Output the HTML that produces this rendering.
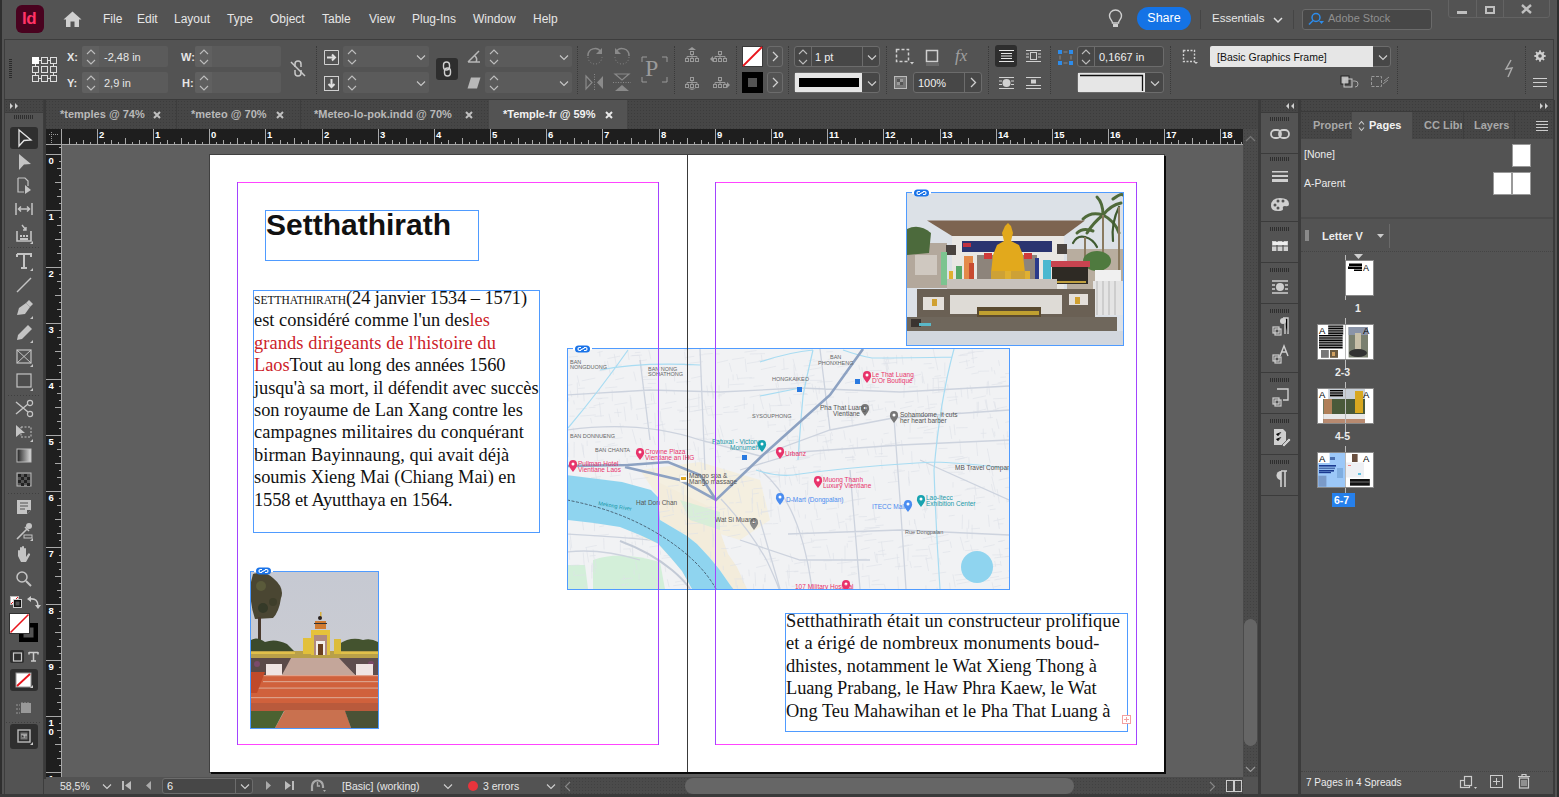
<!DOCTYPE html><html><head><meta charset="utf-8"><style>
*{margin:0;padding:0;box-sizing:border-box}
html,body{width:1559px;height:797px;overflow:hidden;background:#535353;font-family:"Liberation Sans",sans-serif}
.a{position:absolute}
.menu{position:absolute;top:12px;font-size:12px;color:#e6e6e6;white-space:nowrap}
.lbl{position:absolute;font-size:11px;color:#e6e6e6;font-weight:bold;white-space:nowrap}
.fld{position:absolute;background:#5b5b5b;border-radius:2px}
.sep{position:absolute;width:1px;border-left:1px dotted #3a3a3a}
.tab{position:absolute;top:108px;font-size:11px;font-weight:bold;color:#b9b9b9;white-space:nowrap}
.ser{font-family:"Liberation Serif",serif}
</style></head><body>
<div class="a" style="left:0;top:0;width:2px;height:797px;background:#2f2f2f"></div>
<div class="a" style="left:16px;top:5px;width:28px;height:28px;border-radius:6px;background:#49021f"></div>
<div class="a" style="left:22px;top:9px;font-size:17px;font-weight:bold;color:#ff3366;letter-spacing:-0.5px">Id</div>
<svg class="a" style="left:63px;top:11px" width="19" height="17"><path d="M9.5 0.5 L18.5 8.5 L16 8.5 L16 16 L11.5 16 L11.5 10.5 L7.5 10.5 L7.5 16 L3 16 L3 8.5 L0.5 8.5 Z" fill="#cfcfcf"/></svg>
<div class="menu" style="left:103px">File</div>
<div class="menu" style="left:137px">Edit</div>
<div class="menu" style="left:174px">Layout</div>
<div class="menu" style="left:227px">Type</div>
<div class="menu" style="left:270px">Object</div>
<div class="menu" style="left:322px">Table</div>
<div class="menu" style="left:369px">View</div>
<div class="menu" style="left:412px">Plug-Ins</div>
<div class="menu" style="left:473px">Window</div>
<div class="menu" style="left:533px">Help</div>
<svg class="a" style="left:1108px;top:9px" width="15" height="20"><path d="M7.5 1 C3.5 1 1.5 4 1.5 7 C1.5 10 4.5 11.5 4.5 14 L10.5 14 C10.5 11.5 13.5 10 13.5 7 C13.5 4 11.5 1 7.5 1 Z" fill="none" stroke="#cfcfcf" stroke-width="1.4"/><rect x="5" y="15" width="5" height="3" fill="#cfcfcf"/></svg>
<div class="a" style="left:1137px;top:7px;width:54px;height:23px;border-radius:12px;background:#1473e6;color:#fff;font-size:12.5px;text-align:center;line-height:23px">Share</div>
<div class="a" style="left:1200px;top:10px;width:1px;height:19px;background:#454545"></div>
<div class="menu" style="left:1212px;font-size:11.5px">Essentials</div>
<svg class="a" style="left:1273px;top:17px" width="10" height="7"><path d="M1 1 L5 5 L9 1" fill="none" stroke="#e0e0e0" stroke-width="1.5"/></svg>
<div class="a" style="left:1293px;top:10px;width:1px;height:19px;background:#454545"></div>
<div class="a" style="left:1302px;top:9px;width:130px;height:21px;border:1px solid #6a6a6a;border-radius:3px;background:#474747"></div>
<svg class="a" style="left:1307px;top:12px" width="18" height="14"><circle cx="9" cy="5.5" r="4" fill="none" stroke="#2d8ceb" stroke-width="1.5"/><line x1="6" y1="8.5" x2="2" y2="12.5" stroke="#2d8ceb" stroke-width="1.6"/><path d="M12 9 L17 9 L14.5 12 Z" fill="#2d8ceb"/></svg>
<div class="a" style="left:1328px;top:12px;font-size:11px;color:#8f8f8f">Adobe Stock</div>
<div class="a" style="left:1448px;top:-3px;width:102px;height:21px;border:1px solid #636363;border-radius:3px"></div>
<div class="a" style="left:1476px;top:0;width:1px;height:18px;background:#636363"></div>
<div class="a" style="left:1503px;top:0;width:1px;height:18px;background:#636363"></div>
<div class="a" style="left:1457px;top:11px;width:10px;height:3px;background:#bfbfbf"></div>
<div class="a" style="left:1485px;top:6px;width:10px;height:8px;border:2px solid #bfbfbf"></div>
<svg class="a" style="left:1521px;top:4px" width="11" height="10"><path d="M1 1 L10 9 M10 1 L1 9" stroke="#bfbfbf" stroke-width="2.4"/></svg>
<div class="a" style="left:4px;top:39px;width:1550px;height:61px;border:1px solid #3d3d3d;border-bottom:none"></div>
<div class="a" style="left:9px;top:59px;width:3px;height:20px;background:repeating-linear-gradient(#2a2a2a 0 1px,transparent 1px 2px)"></div>
<svg class="a" style="left:31px;top:56px" width="27" height="27"><g fill="none" stroke="#dedede" stroke-width="1"><rect x="1.5" y="1.5" width="6" height="6"/><rect x="10.5" y="1.5" width="6" height="6"/><rect x="19.5" y="1.5" width="6" height="6"/><rect x="1.5" y="10.5" width="6" height="6"/><rect x="10.5" y="10.5" width="6" height="6"/><rect x="19.5" y="10.5" width="6" height="6"/><rect x="1.5" y="19.5" width="6" height="6"/><rect x="10.5" y="19.5" width="6" height="6"/><rect x="19.5" y="19.5" width="6" height="6"/><path d="M7.5 4.5 H10.5 M16.5 4.5 H19.5 M7.5 22.5 H10.5 M16.5 22.5 H19.5 M4.5 7.5 V10.5 M4.5 16.5 V19.5 M22.5 7.5 V10.5 M22.5 16.5 V19.5"/></g><rect x="1" y="1" width="7" height="7" fill="#fff"/></svg>
<div class="lbl" style="left:67px;top:51px">X:</div>
<div class="lbl" style="left:67px;top:77px">Y:</div>
<div class="fld" style="left:82px;top:46px;width:86px;height:21px"></div>
<div class="a" style="left:82px;top:46px;width:17px;height:21px;background:#606060;border-radius:2px 0 0 2px"></div>
<svg class="a" style="left:85px;top:48px" width="12" height="18"><path d="M2 6 L6 2 L10 6 M2 12 L6 16 L10 12" fill="none" stroke="#bdbdbd" stroke-width="1.1"/></svg>
<div class="fld" style="left:82px;top:72px;width:86px;height:21px"></div>
<div class="a" style="left:82px;top:72px;width:17px;height:21px;background:#606060;border-radius:2px 0 0 2px"></div>
<svg class="a" style="left:85px;top:74px" width="12" height="18"><path d="M2 6 L6 2 L10 6 M2 12 L6 16 L10 12" fill="none" stroke="#bdbdbd" stroke-width="1.1"/></svg>
<div class="a" style="left:104px;top:51px;font-size:11px;color:#e6e6e6">-2,48 in</div>
<div class="a" style="left:104px;top:77px;font-size:11px;color:#e6e6e6">2,9 in</div>
<div class="lbl" style="left:181px;top:51px">W:</div>
<div class="lbl" style="left:182px;top:77px">H:</div>
<div class="fld" style="left:195px;top:46px;width:86px;height:21px"></div>
<div class="a" style="left:195px;top:46px;width:17px;height:21px;background:#606060;border-radius:2px 0 0 2px"></div>
<svg class="a" style="left:198px;top:48px" width="12" height="18"><path d="M2 6 L6 2 L10 6 M2 12 L6 16 L10 12" fill="none" stroke="#bdbdbd" stroke-width="1.1"/></svg>
<div class="fld" style="left:195px;top:72px;width:86px;height:21px"></div>
<div class="a" style="left:195px;top:72px;width:17px;height:21px;background:#606060;border-radius:2px 0 0 2px"></div>
<svg class="a" style="left:198px;top:74px" width="12" height="18"><path d="M2 6 L6 2 L10 6 M2 12 L6 16 L10 12" fill="none" stroke="#bdbdbd" stroke-width="1.1"/></svg>
<svg class="a" style="left:290px;top:60px" width="16" height="17"><g fill="none" stroke="#c8c8c8" stroke-width="1.5"><path d="M5 7 V4 A3 3 0 0 1 11 4 V7"/><path d="M5 10 V13 A3 3 0 0 0 11 13 V10"/><line x1="1" y1="2" x2="15" y2="16"/></g></svg>
<div class="sep" style="left:316px;top:46px;height:48px"></div>
<svg class="a" style="left:324px;top:50px" width="15" height="15"><rect x="0.5" y="0.5" width="14" height="14" fill="none" stroke="#d0d0d0" stroke-dasharray="14 0"/><path d="M3 7.5 H11 M8 4.5 L11 7.5 L8 10.5" fill="none" stroke="#e0e0e0" stroke-width="2"/></svg>
<svg class="a" style="left:324px;top:76px" width="15" height="15"><rect x="0.5" y="0.5" width="14" height="14" fill="none" stroke="#d0d0d0"/><path d="M7.5 3 V11 M4.5 8 L7.5 11 L10.5 8" fill="none" stroke="#e0e0e0" stroke-width="2"/></svg>
<div class="fld" style="left:343px;top:46px;width:86px;height:21px"></div>
<svg class="a" style="left:346px;top:48px" width="12" height="18"><path d="M2 6 L6 2 L10 6 M2 12 L6 16 L10 12" fill="none" stroke="#bdbdbd" stroke-width="1.1"/></svg>
<svg class="a" style="left:416px;top:54px" width="10" height="7"><path d="M1 1.5 L5 5.5 L9 1.5" fill="none" stroke="#c8c8c8" stroke-width="1.1"/></svg>
<div class="fld" style="left:343px;top:72px;width:86px;height:21px"></div>
<svg class="a" style="left:346px;top:74px" width="12" height="18"><path d="M2 6 L6 2 L10 6 M2 12 L6 16 L10 12" fill="none" stroke="#bdbdbd" stroke-width="1.1"/></svg>
<svg class="a" style="left:416px;top:80px" width="10" height="7"><path d="M1 1.5 L5 5.5 L9 1.5" fill="none" stroke="#c8c8c8" stroke-width="1.1"/></svg>
<div class="a" style="left:436px;top:58px;width:22px;height:22px;background:#2e2e2e;border-radius:3px"></div>
<svg class="a" style="left:441px;top:61px" width="12" height="16"><g fill="none" stroke="#cfcfcf" stroke-width="1.4"><rect x="2.5" y="1" width="6" height="8" rx="3"/><rect x="3.5" y="7" width="6" height="8" rx="3"/></g></svg>
<svg class="a" style="left:467px;top:50px" width="14" height="13"><path d="M1 12 L12 1 M1 12 H13 M8 6 A5 5 0 0 1 9 12" fill="none" stroke="#b8b8b8" stroke-width="1.5"/></svg>
<svg class="a" style="left:467px;top:77px" width="14" height="12"><path d="M4 0.5 H13.5 L10 11.5 H0.5 Z" fill="#b8b8b8"/></svg>
<div class="fld" style="left:485px;top:46px;width:87px;height:21px"></div>
<svg class="a" style="left:488px;top:48px" width="12" height="18"><path d="M2 6 L6 2 L10 6 M2 12 L6 16 L10 12" fill="none" stroke="#bdbdbd" stroke-width="1.1"/></svg>
<svg class="a" style="left:559px;top:54px" width="10" height="7"><path d="M1 1.5 L5 5.5 L9 1.5" fill="none" stroke="#c8c8c8" stroke-width="1.1"/></svg>
<div class="fld" style="left:485px;top:72px;width:87px;height:21px"></div>
<svg class="a" style="left:488px;top:74px" width="12" height="18"><path d="M2 6 L6 2 L10 6 M2 12 L6 16 L10 12" fill="none" stroke="#bdbdbd" stroke-width="1.1"/></svg>
<svg class="a" style="left:559px;top:80px" width="10" height="7"><path d="M1 1.5 L5 5.5 L9 1.5" fill="none" stroke="#c8c8c8" stroke-width="1.1"/></svg>
<div class="sep" style="left:577px;top:46px;height:48px"></div>
<svg class="a" style="left:586px;top:47px" width="18" height="18"><path d="M2 9 A7 7 0 0 1 15 5" fill="none" stroke="#8a8a8a" stroke-width="1.5"/><path d="M2 10 A7 7 0 0 0 16 10" fill="none" stroke="#8a8a8a" stroke-width="1" stroke-dasharray="1 2"/><path d="M16 1 V7 H10 Z" fill="#8a8a8a"/></svg>
<svg class="a" style="left:613px;top:47px" width="18" height="18"><path d="M16 9 A7 7 0 0 0 3 5" fill="none" stroke="#8a8a8a" stroke-width="1.5"/><path d="M16 10 A7 7 0 0 1 2 10" fill="none" stroke="#8a8a8a" stroke-width="1" stroke-dasharray="1 2"/><path d="M2 1 V7 H8 Z" fill="#8a8a8a"/></svg>
<svg class="a" style="left:585px;top:74px" width="19" height="17"><path d="M1 2 L7 8.5 L1 15 Z" fill="none" stroke="#8a8a8a" stroke-width="1.2"/><path d="M18 2 L12 8.5 L18 15 Z" fill="#8a8a8a"/><line x1="9.5" y1="0" x2="9.5" y2="17" stroke="#8a8a8a" stroke-dasharray="1 1.5"/></svg>
<svg class="a" style="left:613px;top:73px" width="18" height="19"><path d="M2 1 H16 L9 7 Z" fill="none" stroke="#8a8a8a" stroke-width="1.2"/><path d="M2 18 H16 L9 12 Z" fill="#8a8a8a"/><line x1="0" y1="9.5" x2="18" y2="9.5" stroke="#8a8a8a" stroke-dasharray="1 1.5"/></svg>
<svg class="a" style="left:641px;top:56px" width="27" height="27"><path d="M1 6 V1 H6 M21 1 H26 V6 M26 21 V26 H21 M6 26 H1 V21" fill="none" stroke="#9a9a9a" stroke-width="1"/></svg>
<div class="a ser" style="left:645px;top:55px;font-size:24px;color:#9a9a9a">P</div>
<div class="sep" style="left:674px;top:46px;height:48px"></div>
<svg class="a" style="left:682px;top:47px" width="20" height="17"><g fill="none" stroke="#9a9a9a" stroke-width="1"><rect x="8.5" y="4.5" width="3" height="3"/><rect x="3.5" y="11.5" width="3" height="3"/><rect x="8.5" y="11.5" width="3" height="3"/><rect x="13.5" y="11.5" width="3" height="3"/><path d="M10 7.5 V9.5 M5 11.5 V9.5 H15 V11.5 M10 9.5 V11.5"/></g><path d="M6 3 L10 0 L14 3 Z" fill="#9a9a9a"/></svg>
<svg class="a" style="left:710px;top:47px" width="20" height="17"><g fill="none" stroke="#9a9a9a" stroke-width="1"><rect x="8.5" y="4.5" width="3" height="3"/><rect x="3.5" y="11.5" width="3" height="3"/><rect x="8.5" y="11.5" width="3" height="3"/><rect x="13.5" y="11.5" width="3" height="3"/><path d="M10 7.5 V9.5 M5 11.5 V9.5 H15 V11.5 M10 9.5 V11.5"/></g><path d="M3 9 L0 12 L3 15 Z" fill="#9a9a9a"/></svg>
<svg class="a" style="left:682px;top:73px" width="20" height="17"><g fill="none" stroke="#9a9a9a" stroke-width="1"><rect x="8.5" y="4.5" width="3" height="3"/><rect x="3.5" y="11.5" width="3" height="3"/><rect x="8.5" y="11.5" width="3" height="3"/><rect x="13.5" y="11.5" width="3" height="3"/><path d="M10 7.5 V9.5 M5 11.5 V9.5 H15 V11.5 M10 9.5 V11.5"/></g><path d="M6 15.5 L10 17 L14 15.5 Z" fill="#9a9a9a"/></svg>
<svg class="a" style="left:710px;top:73px" width="20" height="17"><g fill="none" stroke="#9a9a9a" stroke-width="1"><rect x="8.5" y="4.5" width="3" height="3"/><rect x="3.5" y="11.5" width="3" height="3"/><rect x="8.5" y="11.5" width="3" height="3"/><rect x="13.5" y="11.5" width="3" height="3"/><path d="M10 7.5 V9.5 M5 11.5 V9.5 H15 V11.5 M10 9.5 V11.5"/></g><path d="M17 9 L20 12 L17 15 Z" fill="#9a9a9a"/></svg>
<div class="sep" style="left:736px;top:46px;height:48px"></div>
<svg class="a" style="left:742px;top:46px" width="21" height="21"><rect x="0.5" y="0.5" width="20" height="20" fill="#fff" stroke="#3a3a3a"/><line x1="1" y1="20" x2="20" y2="1" stroke="#e8141b" stroke-width="1.8"/></svg>
<svg class="a" style="left:742px;top:72px" width="21" height="21"><rect x="0" y="0" width="21" height="21" fill="#000"/><rect x="6" y="6" width="9" height="9" fill="#535353"/></svg>
<div class="a" style="left:767px;top:46px;width:16px;height:21px;border:1px solid #6c6c6c;border-radius:3px"></div>
<svg class="a" style="left:772px;top:51px" width="7" height="11"><path d="M1 1 L5.5 5.5 L1 10" fill="none" stroke="#d0d0d0" stroke-width="1.3"/></svg>
<div class="a" style="left:767px;top:72px;width:16px;height:21px;border:1px solid #6c6c6c;border-radius:3px"></div>
<svg class="a" style="left:772px;top:77px" width="7" height="11"><path d="M1 1 L5.5 5.5 L1 10" fill="none" stroke="#d0d0d0" stroke-width="1.3"/></svg>
<div class="sep" style="left:788px;top:46px;height:48px"></div>
<div class="a" style="left:794px;top:46px;width:86px;height:21px;border:1px solid #6c6c6c;border-radius:3px;background:#474747"></div>
<div class="a" style="left:811px;top:46px;width:1px;height:21px;background:#6c6c6c"></div>
<div class="a" style="left:862px;top:46px;width:1px;height:21px;background:#6c6c6c"></div>
<svg class="a" style="left:797px;top:48px" width="12" height="18"><path d="M2 6 L6 2 L10 6 M2 12 L6 16 L10 12" fill="none" stroke="#bdbdbd" stroke-width="1.1"/></svg>
<svg class="a" style="left:867px;top:54px" width="10" height="7"><path d="M1 1.5 L5 5.5 L9 1.5" fill="none" stroke="#d0d0d0" stroke-width="1.1"/></svg>
<div class="a" style="left:815px;top:51px;font-size:11px;color:#f0f0f0">1 pt</div>
<div class="a" style="left:794px;top:72px;width:86px;height:21px;border:1px solid #6c6c6c;border-radius:3px;background:#474747"></div>
<div class="a" style="left:795px;top:73px;width:67px;height:19px;background:#e6e6e6"></div>
<div class="a" style="left:799px;top:78px;width:60px;height:9px;background:#000"></div>
<svg class="a" style="left:867px;top:80px" width="10" height="7"><path d="M1 1.5 L5 5.5 L9 1.5" fill="none" stroke="#d0d0d0" stroke-width="1.1"/></svg>
<div class="sep" style="left:886px;top:46px;height:48px"></div>
<svg class="a" style="left:895px;top:48px" width="20" height="18"><rect x="1.5" y="1.5" width="12" height="12" fill="none" stroke="#cfcfcf" stroke-width="1.5" stroke-dasharray="3 2"/><path d="M15 14 L19 14 L17 16.5 Z" fill="#cfcfcf"/></svg>
<svg class="a" style="left:925px;top:49px" width="15" height="18"><rect x="1.5" y="1.5" width="11" height="11" fill="none" stroke="#cfcfcf" stroke-width="1.5"/><rect x="1" y="14" width="13" height="3" fill="#6a6a6a"/></svg>
<div class="a ser" style="left:955px;top:46px;font-size:17px;font-style:italic;color:#a0a0a0">fx</div>
<svg class="a" style="left:894px;top:76px" width="13" height="13"><rect x="0.5" y="0.5" width="12" height="12" fill="#777" stroke="#bbb"/><rect x="3" y="3" width="3" height="3" fill="#555"/><rect x="6" y="6" width="3" height="3" fill="#555"/><rect x="6" y="3" width="3" height="3" fill="#999"/><rect x="3" y="6" width="3" height="3" fill="#999"/></svg>
<div class="a" style="left:913px;top:72px;width:69px;height:21px;border:1px solid #6c6c6c;border-radius:3px;background:#474747"></div>
<div class="a" style="left:964px;top:72px;width:1px;height:21px;background:#6c6c6c"></div>
<div class="a" style="left:918px;top:77px;font-size:11px;color:#f0f0f0">100%</div>
<svg class="a" style="left:970px;top:77px" width="7" height="11"><path d="M1 1 L5.5 5.5 L1 10" fill="none" stroke="#d0d0d0" stroke-width="1.3"/></svg>
<div class="sep" style="left:988px;top:46px;height:48px"></div>
<div class="a" style="left:995px;top:45px;width:22px;height:22px;background:#2e2e2e;border-radius:3px"></div>
<svg class="a" style="left:999px;top:49px" width="15" height="14"><path d="M0 1.5 H15 M0 12.5 H15 M2 4.5 H13 M2 7 H13 M2 9.5 H13" stroke="#e8e8e8" stroke-width="1.2"/></svg>
<svg class="a" style="left:1026px;top:49px" width="15" height="14"><path d="M0 1.5 H15 M0 12.5 H15 M0 5 H3 M0 8 H3 M12 5 H15 M12 8 H15" stroke="#d0d0d0" stroke-width="1.2"/><rect x="4.5" y="3.5" width="6" height="7" fill="none" stroke="#d0d0d0"/></svg>
<svg class="a" style="left:999px;top:76px" width="15" height="14"><path d="M0 1.5 H15 M0 12.5 H15 M0 5 H3 M0 8.5 H3 M12 5 H15 M12 8.5 H15" stroke="#d0d0d0" stroke-width="1.2"/><circle cx="7.5" cy="7" r="4" fill="#d0d0d0"/></svg>
<svg class="a" style="left:1026px;top:76px" width="15" height="14"><path d="M0 1.5 H15 M0 9.5 H15 M0 12.5 H15" stroke="#d0d0d0" stroke-width="1.2"/><rect x="5" y="3.5" width="5" height="4" fill="#d0d0d0"/></svg>
<div class="sep" style="left:1050px;top:46px;height:48px"></div>
<svg class="a" style="left:1058px;top:50px" width="15" height="15"><g fill="#2d8ceb"><rect x="0" y="0" width="4" height="4"/><rect x="11" y="0" width="4" height="4"/><rect x="0" y="11" width="4" height="4"/><rect x="11" y="11" width="4" height="4"/></g><path d="M5.5 2 H9.5 M5.5 13 H9.5 M2 5.5 V9.5 M13 5.5 V9.5" stroke="#888" stroke-width="1"/></svg>
<div class="a" style="left:1077px;top:46px;width:87px;height:21px;border:1px solid #6c6c6c;border-radius:3px;background:#474747"></div>
<div class="a" style="left:1094px;top:46px;width:1px;height:21px;background:#6c6c6c"></div>
<svg class="a" style="left:1080px;top:48px" width="12" height="18"><path d="M2 6 L6 2 L10 6 M2 12 L6 16 L10 12" fill="none" stroke="#bdbdbd" stroke-width="1.1"/></svg>
<div class="a" style="left:1099px;top:51px;font-size:11px;color:#f0f0f0">0,1667 in</div>
<div class="a" style="left:1077px;top:72px;width:87px;height:21px;border:1px solid #6c6c6c;border-radius:3px;background:#474747"></div>
<div class="a" style="left:1078px;top:73px;width:67px;height:19px;background:#e6e6e6"></div>
<svg class="a" style="left:1079px;top:74px" width="65" height="17"><path d="M1 1.5 H63.5 V17" fill="none" stroke="#111" stroke-width="1.3"/></svg>
<svg class="a" style="left:1150px;top:80px" width="10" height="7"><path d="M1 1.5 L5 5.5 L9 1.5" fill="none" stroke="#d0d0d0" stroke-width="1.1"/></svg>
<div class="sep" style="left:1170px;top:46px;height:48px"></div>
<svg class="a" style="left:1182px;top:49px" width="16" height="15"><rect x="1.5" y="1.5" width="11" height="11" fill="none" stroke="#cfcfcf" stroke-width="1.4" stroke-dasharray="2 1.5"/><path d="M12 13 L16 13 L14 15 Z" fill="#cfcfcf"/></svg>
<div class="a" style="left:1210px;top:46px;width:181px;height:21px;border:1px solid #6c6c6c;border-radius:3px;background:#474747"></div>
<div class="a" style="left:1210px;top:46px;width:163px;height:21px;background:#e6e6e6;border-radius:2px 0 0 2px"></div>
<div class="a" style="left:1217px;top:51px;font-size:10.5px;color:#111">[Basic Graphics Frame]</div>
<svg class="a" style="left:1378px;top:54px" width="10" height="7"><path d="M1 1.5 L5 5.5 L9 1.5" fill="none" stroke="#d0d0d0" stroke-width="1.1"/></svg>
<svg class="a" style="left:1340px;top:75px" width="22" height="15"><rect x="1" y="1" width="8" height="8" fill="#bbb" stroke="#222"/><rect x="4" y="4" width="8" height="8" fill="none" stroke="#ccc"/><path d="M15 12 A3 3 0 1 0 15 6 L13 6" fill="none" stroke="#aaa"/></svg>
<svg class="a" style="left:1370px;top:75px" width="20" height="14"><rect x="1.5" y="1.5" width="10" height="10" fill="none" stroke="#999" stroke-dasharray="3 1.5"/><path d="M14 6 L19 2 M13 9 L18 5" stroke="#999"/></svg>
<div class="sep" style="left:1397px;top:46px;height:48px"></div>
<svg class="a" style="left:1504px;top:59px" width="12" height="19"><path d="M7 1 L2 10 L8 9 L4 18" fill="none" stroke="#aaa" stroke-width="1.5"/></svg>
<div class="sep" style="left:1525px;top:46px;height:48px"></div>
<svg class="a" style="left:1534px;top:50px" width="12" height="12"><path d="M10.08 4.99 L11.75 5.24 L11.75 6.76 L10.08 7.01 L9.60 8.17 L10.61 9.53 L9.53 10.61 L8.17 9.60 L7.01 10.08 L6.76 11.75 L5.24 11.75 L4.99 10.08 L3.83 9.60 L2.47 10.61 L1.39 9.53 L2.40 8.17 L1.92 7.01 L0.25 6.76 L0.25 5.24 L1.92 4.99 L2.40 3.83 L1.39 2.47 L2.47 1.39 L3.83 2.40 L4.99 1.92 L5.24 0.25 L6.76 0.25 L7.01 1.92 L8.17 2.40 L9.53 1.39 L10.61 2.47 L9.60 3.83 Z" fill="#d0d0d0"/><circle cx="6" cy="6" r="1.8" fill="#535353"/></svg>
<svg class="a" style="left:1533px;top:78px" width="14" height="9"><path d="M0 0.5 H14 M0 4.5 H14 M0 8.5 H14" stroke="#d0d0d0"/></svg>
<div class="a" style="left:45px;top:100px;width:1213px;height:29px;background-color:#464646;background-image:radial-gradient(#3c3c3c 0.7px,transparent 0.8px);background-size:3px 3px"></div>
<div class="a" style="left:44px;top:100px;width:2px;height:29px;background:#3a3a3a"></div>
<div class="a" style="left:176px;top:100px;width:1px;height:29px;background:#3d3d3d"></div>
<div class="a" style="left:300px;top:100px;width:1px;height:29px;background:#3d3d3d"></div>
<div class="a" style="left:489px;top:100px;width:138px;height:29px;background:#535353"></div>
<div class="tab" style="left:60px">*temples @ 74%</div>
<svg class="a" style="left:153px;top:111px" width="8" height="8"><path d="M1 1 L7 7 M7 1 L1 7" stroke="#c0c0c0" stroke-width="2"/></svg>
<div class="tab" style="left:191px">*meteo @ 70%</div>
<svg class="a" style="left:276px;top:111px" width="8" height="8"><path d="M1 1 L7 7 M7 1 L1 7" stroke="#c0c0c0" stroke-width="2"/></svg>
<div class="tab" style="left:314px">*Meteo-lo-pok.indd @ 70%</div>
<svg class="a" style="left:465px;top:111px" width="8" height="8"><path d="M1 1 L7 7 M7 1 L1 7" stroke="#c0c0c0" stroke-width="2"/></svg>
<div class="tab" style="left:503px;color:#f2f2f2">*Temple-fr @ 59%</div>
<svg class="a" style="left:605px;top:111px" width="8" height="8"><path d="M1 1 L7 7 M7 1 L1 7" stroke="#e8e8e8" stroke-width="2"/></svg>
<div class="a" style="left:4px;top:100px;width:40px;height:695px;background:#535353;border-left:1px solid #3d3d3d;border-right:1px solid #3d3d3d"></div>
<div class="a" style="left:5px;top:100px;width:38px;height:12px;background-color:#464646;background-image:radial-gradient(#3c3c3c 0.7px,transparent 0.8px);background-size:3px 3px"></div>
<svg class="a" style="left:9px;top:102px" width="12" height="8"><path d="M1 1 L4 4 L1 7 Z M6 1 L9 4 L6 7 Z" fill="#d0d0d0"/></svg>
<div class="a" style="left:5px;top:112px;width:38px;height:1px;background:#3d3d3d"></div>
<div class="a" style="left:14px;top:115px;width:19px;height:4px;background:repeating-linear-gradient(90deg,#2e2e2e 0 1px,transparent 1px 2px)"></div>
<div class="a" style="left:10px;top:127px;width:28px;height:22px;background:#2f2f2f;border-radius:3px"></div>
<svg class="a" style="left:5px;top:120px" width="38" height="640"><g transform="translate(19,18)"><path d="M-5 -8 L7 2 L0 2.5 L-5 8 Z" fill="none" stroke="#e6e6e6" stroke-width="1.3"/></g><g transform="translate(19,42)"><path d="M-5 -8 L7 2 L0 2.5 L-5 8 Z" fill="#c4c4c4"/></g><g transform="translate(19,65)"><path d="M-6 -7 H1 L4 -4 V1 M-6 -7 V7 H0" fill="none" stroke="#c4c4c4" stroke-width="1.2"/><path d="M1 0 L7 5 L1 9 Z" fill="#c4c4c4"/></g><g transform="translate(19,89)"><path d="M-8 -6 V6 M8 -6 V6 M-5 0 H5 M-3 -2.5 L-5.5 0 L-3 2.5 M3 -2.5 L5.5 0 L3 2.5" fill="none" stroke="#c4c4c4" stroke-width="1.5"/></g><g transform="translate(19,114)"><path d="M-7 -3 V7 H7 V-3" fill="none" stroke="#c4c4c4" stroke-width="1.6"/><path d="M-2 -9 L2 -4 M2 -7 V-4 H-1" fill="none" stroke="#c4c4c4" stroke-width="1.4"/><rect x="-4" y="1" width="2" height="2" fill="#c4c4c4"/><rect x="-1" y="1" width="2" height="2" fill="#c4c4c4"/><rect x="2" y="1" width="2" height="2" fill="#c4c4c4"/><rect x="-4" y="4" width="8" height="2" fill="#c4c4c4"/><path d="M9 7 L9 10 L6 10 Z" fill="#c4c4c4"/></g><g transform="translate(19,141)"><path d="M-7 -7 H7 V-4 M-7 -7 V-4 M0 -7 V7 M-3 7 H3" fill="none" stroke="#c4c4c4" stroke-width="2"/><path d="M9 7 L9 10 L6 10 Z" fill="#c4c4c4"/></g><g transform="translate(19,165)"><path d="M-7 7 L7 -7" stroke="#c4c4c4" stroke-width="1.5"/></g><g transform="translate(19,189)"><path d="M-7 6 L-5 -1 L2 -6 L6 -2 L1 5 Z" fill="#c4c4c4"/><path d="M2 -6 L5 -9 L9 -5 L6 -2" fill="#c4c4c4"/><path d="M9 7 L9 10 L6 10 Z" fill="#c4c4c4"/></g><g transform="translate(19,213)"><path d="M-7 7 L-6 2 L4 -8 L8 -4 L-2 6 Z" fill="#c4c4c4"/><path d="M9 7 L9 10 L6 10 Z" fill="#c4c4c4"/></g><g transform="translate(19,237)"><rect x="-7" y="-7" width="14" height="13" fill="none" stroke="#c4c4c4" stroke-width="1.2"/><path d="M-7 -7 L7 6 M7 -7 L-7 6" stroke="#c4c4c4" stroke-width="1"/><path d="M9 7 L9 10 L6 10 Z" fill="#c4c4c4"/></g><g transform="translate(19,261)"><rect x="-7" y="-7" width="14" height="13" fill="#4d4d4d" stroke="#c4c4c4" stroke-width="1.2"/><path d="M9 7 L9 10 L6 10 Z" fill="#c4c4c4"/></g><g transform="translate(19,288)"><circle cx="6" cy="-5" r="2.6" fill="none" stroke="#c4c4c4" stroke-width="1.2"/><circle cx="6" cy="6" r="2.6" fill="none" stroke="#c4c4c4" stroke-width="1.2"/><path d="M-8 -6 L4 4 M-8 6 L4 -4" stroke="#c4c4c4" stroke-width="1.4"/></g><g transform="translate(19,312)"><path d="M-8 -7 L1 1 L-3 1 L-8 5 Z" fill="#c4c4c4"/><rect x="-3" y="-5" width="10" height="10" fill="none" stroke="#c4c4c4" stroke-dasharray="2 1.5"/><path d="M9 7 L9 10 L6 10 Z" fill="#c4c4c4"/></g><g transform="translate(19,336)"><defs><linearGradient id="gg"><stop offset="0" stop-color="#222"/><stop offset="1" stop-color="#ddd"/></linearGradient></defs><rect x="-7" y="-7" width="14" height="13" fill="url(#gg)" stroke="#bbb"/></g><g transform="translate(19,360)"><rect x="-7" y="-7" width="14" height="13" fill="#555" stroke="#bbb"/><g fill="#222"><rect x="-6" y="-6" width="3" height="3"/><rect x="0" y="-6" width="3" height="3"/><rect x="-3" y="-3" width="3" height="3"/><rect x="3" y="-3" width="3" height="3"/><rect x="-6" y="0" width="3" height="3"/><rect x="0" y="0" width="3" height="3"/><rect x="-3" y="3" width="3" height="3"/><rect x="3" y="3" width="3" height="3"/></g></g><g transform="translate(19,387)"><path d="M-7 -7 H7 V3 L3 7 H-7 Z" fill="#c4c4c4"/><path d="M-4 -4 H4 M-4 -1 H4 M-4 2 H1" stroke="#535353" stroke-width="1.2"/><path d="M3 7 V3 H7" fill="#535353"/></g><g transform="translate(19,411)"><path d="M-7 8 L3 -2 M1 -4 L5 0" stroke="#c4c4c4" stroke-width="1.6"/><circle cx="5" cy="-5" r="3" fill="#c4c4c4"/><rect x="0" y="4" width="8" height="3" fill="none" stroke="#c4c4c4"/><path d="M9 7 L9 10 L6 10 Z" fill="#c4c4c4"/></g><g transform="translate(19,435)"><path d="M-6 1 V-4 A1 1 0 0 1 -4 -4 V0 V-7 A1 1 0 0 1 -2 -7 V0 V-8 A1 1 0 0 1 0 -8 V0 V-6 A1 1 0 0 1 2 -6 V2 L4 -1 A1 1 0 0 1 6 0 L2 7 H-3 Z" fill="#c4c4c4"/></g><g transform="translate(19,459)"><circle cx="-2" cy="-2" r="5" fill="none" stroke="#c4c4c4" stroke-width="1.5"/><path d="M2 2 L7 7" stroke="#c4c4c4" stroke-width="2"/></g><line x1="3" y1="127.5" x2="35" y2="127.5" stroke="#3f3f3f" stroke-dasharray="1 2"/><line x1="3" y1="275.5" x2="35" y2="275.5" stroke="#3f3f3f" stroke-dasharray="1 2"/><line x1="3" y1="373.5" x2="35" y2="373.5" stroke="#3f3f3f" stroke-dasharray="1 2"/></svg>
<svg class="a" style="left:8px;top:595px" width="34" height="50"><rect x="2.5" y="1.5" width="8" height="8" fill="#fff" stroke="#bbb"/><line x1="3" y1="9" x2="10" y2="2" stroke="#e8141b"/><rect x="5.5" y="4.5" width="8" height="8" fill="#111" stroke="#ccc"/><rect x="7.5" y="6.5" width="4" height="4" fill="#535353"/><path d="M22 4 Q30 3 30 11" fill="none" stroke="#ccc" stroke-width="1.6"/><path d="M27 10 L30 14 L33 10 Z M23 1 L19 4 L23 7 Z" fill="#ccc"/><rect x="11" y="28" width="19" height="19" fill="#000"/><rect x="15.5" y="32.5" width="10" height="10" fill="#535353"/><rect x="1.5" y="18.5" width="20" height="20" fill="#fff" stroke="#333"/><line x1="2.5" y1="37.5" x2="20.5" y2="19.5" stroke="#e8141b" stroke-width="1.6"/></svg>
<div class="a" style="left:10px;top:650px;width:14px;height:13px;background:#2f2f2f;border-radius:2px"></div>
<svg class="a" style="left:10px;top:650px" width="32" height="14"><rect x="3.5" y="3" width="8" height="8" fill="none" stroke="#ccc" stroke-width="1.2"/><path d="M19 2.5 H28 M23.5 2.5 V11 M21 11 H26 M19 2 V4.5 M28 2 V4.5" stroke="#ccc" stroke-width="1.5"/></svg>
<div class="a" style="left:10px;top:669px;width:28px;height:22px;background:#2f2f2f;border-radius:3px"></div>
<svg class="a" style="left:15px;top:672px" width="19" height="17"><rect x="1" y="1" width="15" height="14" fill="#fff" stroke="#999"/><line x1="2" y1="14" x2="15" y2="2" stroke="#e8141b" stroke-width="1.8"/><path d="M18 13 L18 16 L15 16 Z" fill="#ccc"/></svg>
<svg class="a" style="left:15px;top:701px" width="20" height="14"><path d="M6 2 H16 V12 H6 Z" fill="#999"/><path d="M1 4 H5 M1 8 H5 M1 12 H5 M7 1 V2 M10 1 V2 M13 1 V2" stroke="#999" stroke-dasharray="2 1"/></svg>
<svg class="a" style="left:3px;top:722px" width="40" height="2"><line x1="3" y1="0.5" x2="38" y2="0.5" stroke="#3f3f3f" stroke-dasharray="1 2"/></svg>
<div class="a" style="left:10px;top:724px;width:28px;height:25px;background:#2f2f2f;border-radius:3px"></div>
<svg class="a" style="left:16px;top:728px" width="18" height="18"><rect x="2" y="2" width="12" height="12" fill="none" stroke="#bbb" stroke-width="1.4"/><rect x="4.5" y="4.5" width="7" height="7" fill="#777"/><path d="M5 7 H8 V10 M8 7 H11" stroke="#ccc"/><path d="M17 14 L17 17 L14 17 Z" fill="#ccc"/></svg>
<div class="a" style="left:44px;top:129px;width:2px;height:650px;background:#3a3a3a"></div>
<div class="a" style="left:46px;top:129px;width:16px;height:16px;background:#1e1e1e"></div>
<svg class="a" style="left:46px;top:129px" width="16" height="16"><path d="M3 5.5 H12 M5.5 3 V14" stroke="#999" stroke-dasharray="1 1"/><line x1="15.5" y1="0" x2="15.5" y2="16" stroke="#a8a8a8"/><line x1="0" y1="15.5" x2="16" y2="15.5" stroke="#a8a8a8"/></svg>
<svg style="position:absolute;left:62px;top:129px" width="1181" height="16"><rect width="1181" height="16" fill="#1e1e1e"/><g stroke="#a8a8a8" stroke-width="1"><line x1="7.5" y1="9" x2="7.5" y2="15"/><line x1="14.5" y1="13" x2="14.5" y2="15"/><line x1="21.5" y1="11" x2="21.5" y2="15"/><line x1="28.5" y1="13" x2="28.5" y2="15"/><line x1="35.5" y1="0" x2="35.5" y2="15"/><line x1="42.5" y1="13" x2="42.5" y2="15"/><line x1="49.5" y1="11" x2="49.5" y2="15"/><line x1="56.5" y1="13" x2="56.5" y2="15"/><line x1="63.5" y1="9" x2="63.5" y2="15"/><line x1="70.5" y1="13" x2="70.5" y2="15"/><line x1="77.5" y1="11" x2="77.5" y2="15"/><line x1="84.5" y1="13" x2="84.5" y2="15"/><line x1="91.5" y1="0" x2="91.5" y2="15"/><line x1="98.5" y1="13" x2="98.5" y2="15"/><line x1="105.5" y1="11" x2="105.5" y2="15"/><line x1="112.5" y1="13" x2="112.5" y2="15"/><line x1="119.5" y1="9" x2="119.5" y2="15"/><line x1="126.5" y1="13" x2="126.5" y2="15"/><line x1="133.5" y1="11" x2="133.5" y2="15"/><line x1="140.5" y1="13" x2="140.5" y2="15"/><line x1="147.5" y1="0" x2="147.5" y2="15"/><line x1="154.5" y1="13" x2="154.5" y2="15"/><line x1="161.5" y1="11" x2="161.5" y2="15"/><line x1="168.5" y1="13" x2="168.5" y2="15"/><line x1="175.5" y1="9" x2="175.5" y2="15"/><line x1="182.5" y1="13" x2="182.5" y2="15"/><line x1="189.5" y1="11" x2="189.5" y2="15"/><line x1="196.5" y1="13" x2="196.5" y2="15"/><line x1="203.5" y1="0" x2="203.5" y2="15"/><line x1="210.5" y1="13" x2="210.5" y2="15"/><line x1="218.5" y1="11" x2="218.5" y2="15"/><line x1="225.5" y1="13" x2="225.5" y2="15"/><line x1="232.5" y1="9" x2="232.5" y2="15"/><line x1="239.5" y1="13" x2="239.5" y2="15"/><line x1="246.5" y1="11" x2="246.5" y2="15"/><line x1="253.5" y1="13" x2="253.5" y2="15"/><line x1="260.5" y1="0" x2="260.5" y2="15"/><line x1="267.5" y1="13" x2="267.5" y2="15"/><line x1="274.5" y1="11" x2="274.5" y2="15"/><line x1="281.5" y1="13" x2="281.5" y2="15"/><line x1="288.5" y1="9" x2="288.5" y2="15"/><line x1="295.5" y1="13" x2="295.5" y2="15"/><line x1="302.5" y1="11" x2="302.5" y2="15"/><line x1="309.5" y1="13" x2="309.5" y2="15"/><line x1="316.5" y1="0" x2="316.5" y2="15"/><line x1="323.5" y1="13" x2="323.5" y2="15"/><line x1="330.5" y1="11" x2="330.5" y2="15"/><line x1="337.5" y1="13" x2="337.5" y2="15"/><line x1="344.5" y1="9" x2="344.5" y2="15"/><line x1="351.5" y1="13" x2="351.5" y2="15"/><line x1="358.5" y1="11" x2="358.5" y2="15"/><line x1="365.5" y1="13" x2="365.5" y2="15"/><line x1="372.5" y1="0" x2="372.5" y2="15"/><line x1="379.5" y1="13" x2="379.5" y2="15"/><line x1="386.5" y1="11" x2="386.5" y2="15"/><line x1="393.5" y1="13" x2="393.5" y2="15"/><line x1="400.5" y1="9" x2="400.5" y2="15"/><line x1="407.5" y1="13" x2="407.5" y2="15"/><line x1="414.5" y1="11" x2="414.5" y2="15"/><line x1="421.5" y1="13" x2="421.5" y2="15"/><line x1="428.5" y1="0" x2="428.5" y2="15"/><line x1="435.5" y1="13" x2="435.5" y2="15"/><line x1="442.5" y1="11" x2="442.5" y2="15"/><line x1="449.5" y1="13" x2="449.5" y2="15"/><line x1="456.5" y1="9" x2="456.5" y2="15"/><line x1="463.5" y1="13" x2="463.5" y2="15"/><line x1="470.5" y1="11" x2="470.5" y2="15"/><line x1="477.5" y1="13" x2="477.5" y2="15"/><line x1="484.5" y1="0" x2="484.5" y2="15"/><line x1="491.5" y1="13" x2="491.5" y2="15"/><line x1="498.5" y1="11" x2="498.5" y2="15"/><line x1="505.5" y1="13" x2="505.5" y2="15"/><line x1="512.5" y1="9" x2="512.5" y2="15"/><line x1="519.5" y1="13" x2="519.5" y2="15"/><line x1="526.5" y1="11" x2="526.5" y2="15"/><line x1="533.5" y1="13" x2="533.5" y2="15"/><line x1="540.5" y1="0" x2="540.5" y2="15"/><line x1="548.5" y1="13" x2="548.5" y2="15"/><line x1="555.5" y1="11" x2="555.5" y2="15"/><line x1="562.5" y1="13" x2="562.5" y2="15"/><line x1="569.5" y1="9" x2="569.5" y2="15"/><line x1="576.5" y1="13" x2="576.5" y2="15"/><line x1="583.5" y1="11" x2="583.5" y2="15"/><line x1="590.5" y1="13" x2="590.5" y2="15"/><line x1="597.5" y1="0" x2="597.5" y2="15"/><line x1="604.5" y1="13" x2="604.5" y2="15"/><line x1="611.5" y1="11" x2="611.5" y2="15"/><line x1="618.5" y1="13" x2="618.5" y2="15"/><line x1="625.5" y1="9" x2="625.5" y2="15"/><line x1="632.5" y1="13" x2="632.5" y2="15"/><line x1="639.5" y1="11" x2="639.5" y2="15"/><line x1="646.5" y1="13" x2="646.5" y2="15"/><line x1="653.5" y1="0" x2="653.5" y2="15"/><line x1="660.5" y1="13" x2="660.5" y2="15"/><line x1="667.5" y1="11" x2="667.5" y2="15"/><line x1="674.5" y1="13" x2="674.5" y2="15"/><line x1="681.5" y1="9" x2="681.5" y2="15"/><line x1="688.5" y1="13" x2="688.5" y2="15"/><line x1="695.5" y1="11" x2="695.5" y2="15"/><line x1="702.5" y1="13" x2="702.5" y2="15"/><line x1="709.5" y1="0" x2="709.5" y2="15"/><line x1="716.5" y1="13" x2="716.5" y2="15"/><line x1="723.5" y1="11" x2="723.5" y2="15"/><line x1="730.5" y1="13" x2="730.5" y2="15"/><line x1="737.5" y1="9" x2="737.5" y2="15"/><line x1="744.5" y1="13" x2="744.5" y2="15"/><line x1="751.5" y1="11" x2="751.5" y2="15"/><line x1="758.5" y1="13" x2="758.5" y2="15"/><line x1="765.5" y1="0" x2="765.5" y2="15"/><line x1="772.5" y1="13" x2="772.5" y2="15"/><line x1="779.5" y1="11" x2="779.5" y2="15"/><line x1="786.5" y1="13" x2="786.5" y2="15"/><line x1="793.5" y1="9" x2="793.5" y2="15"/><line x1="800.5" y1="13" x2="800.5" y2="15"/><line x1="807.5" y1="11" x2="807.5" y2="15"/><line x1="814.5" y1="13" x2="814.5" y2="15"/><line x1="821.5" y1="0" x2="821.5" y2="15"/><line x1="828.5" y1="13" x2="828.5" y2="15"/><line x1="835.5" y1="11" x2="835.5" y2="15"/><line x1="842.5" y1="13" x2="842.5" y2="15"/><line x1="849.5" y1="9" x2="849.5" y2="15"/><line x1="856.5" y1="13" x2="856.5" y2="15"/><line x1="863.5" y1="11" x2="863.5" y2="15"/><line x1="870.5" y1="13" x2="870.5" y2="15"/><line x1="878.5" y1="0" x2="878.5" y2="15"/><line x1="885.5" y1="13" x2="885.5" y2="15"/><line x1="892.5" y1="11" x2="892.5" y2="15"/><line x1="899.5" y1="13" x2="899.5" y2="15"/><line x1="906.5" y1="9" x2="906.5" y2="15"/><line x1="913.5" y1="13" x2="913.5" y2="15"/><line x1="920.5" y1="11" x2="920.5" y2="15"/><line x1="927.5" y1="13" x2="927.5" y2="15"/><line x1="934.5" y1="0" x2="934.5" y2="15"/><line x1="941.5" y1="13" x2="941.5" y2="15"/><line x1="948.5" y1="11" x2="948.5" y2="15"/><line x1="955.5" y1="13" x2="955.5" y2="15"/><line x1="962.5" y1="9" x2="962.5" y2="15"/><line x1="969.5" y1="13" x2="969.5" y2="15"/><line x1="976.5" y1="11" x2="976.5" y2="15"/><line x1="983.5" y1="13" x2="983.5" y2="15"/><line x1="990.5" y1="0" x2="990.5" y2="15"/><line x1="997.5" y1="13" x2="997.5" y2="15"/><line x1="1004.5" y1="11" x2="1004.5" y2="15"/><line x1="1011.5" y1="13" x2="1011.5" y2="15"/><line x1="1018.5" y1="9" x2="1018.5" y2="15"/><line x1="1025.5" y1="13" x2="1025.5" y2="15"/><line x1="1032.5" y1="11" x2="1032.5" y2="15"/><line x1="1039.5" y1="13" x2="1039.5" y2="15"/><line x1="1046.5" y1="0" x2="1046.5" y2="15"/><line x1="1053.5" y1="13" x2="1053.5" y2="15"/><line x1="1060.5" y1="11" x2="1060.5" y2="15"/><line x1="1067.5" y1="13" x2="1067.5" y2="15"/><line x1="1074.5" y1="9" x2="1074.5" y2="15"/><line x1="1081.5" y1="13" x2="1081.5" y2="15"/><line x1="1088.5" y1="11" x2="1088.5" y2="15"/><line x1="1095.5" y1="13" x2="1095.5" y2="15"/><line x1="1102.5" y1="0" x2="1102.5" y2="15"/><line x1="1109.5" y1="13" x2="1109.5" y2="15"/><line x1="1116.5" y1="11" x2="1116.5" y2="15"/><line x1="1123.5" y1="13" x2="1123.5" y2="15"/><line x1="1130.5" y1="9" x2="1130.5" y2="15"/><line x1="1137.5" y1="13" x2="1137.5" y2="15"/><line x1="1144.5" y1="11" x2="1144.5" y2="15"/><line x1="1151.5" y1="13" x2="1151.5" y2="15"/><line x1="1158.5" y1="0" x2="1158.5" y2="15"/><line x1="1165.5" y1="13" x2="1165.5" y2="15"/><line x1="1172.5" y1="11" x2="1172.5" y2="15"/><line x1="1179.5" y1="13" x2="1179.5" y2="15"/><line x1="0" y1="15.5" x2="1181" y2="15.5"/></g><g fill="#fff" font-family="Liberation Sans" font-size="9.5" font-weight="bold"><text x="37.0" y="9">2</text><text x="93.0" y="9">1</text><text x="149.0" y="9">0</text><text x="205.0" y="9">1</text><text x="262.0" y="9">2</text><text x="318.0" y="9">3</text><text x="374.0" y="9">4</text><text x="430.0" y="9">5</text><text x="486.0" y="9">6</text><text x="542.0" y="9">7</text><text x="599.0" y="9">8</text><text x="655.0" y="9">9</text><text x="711.0" y="9">10</text><text x="767.0" y="9">11</text><text x="823.0" y="9">12</text><text x="880.0" y="9">13</text><text x="936.0" y="9">14</text><text x="992.0" y="9">15</text><text x="1048.0" y="9">16</text><text x="1104.0" y="9">17</text><text x="1160.0" y="9">18</text></g></svg>
<svg style="position:absolute;left:46px;top:145px" width="16" height="632"><rect width="16" height="632" fill="#1e1e1e"/><g stroke="#a8a8a8" stroke-width="1"><line x1="13" y1="2.5" x2="16" y2="2.5"/><line x1="0" y1="9.5" x2="16" y2="9.5"/><line x1="13" y1="16.5" x2="16" y2="16.5"/><line x1="11" y1="23.5" x2="16" y2="23.5"/><line x1="13" y1="30.5" x2="16" y2="30.5"/><line x1="9" y1="37.5" x2="16" y2="37.5"/><line x1="13" y1="44.5" x2="16" y2="44.5"/><line x1="11" y1="51.5" x2="16" y2="51.5"/><line x1="13" y1="58.5" x2="16" y2="58.5"/><line x1="0" y1="65.5" x2="16" y2="65.5"/><line x1="13" y1="72.5" x2="16" y2="72.5"/><line x1="11" y1="80.5" x2="16" y2="80.5"/><line x1="13" y1="87.5" x2="16" y2="87.5"/><line x1="9" y1="94.5" x2="16" y2="94.5"/><line x1="13" y1="101.5" x2="16" y2="101.5"/><line x1="11" y1="108.5" x2="16" y2="108.5"/><line x1="13" y1="115.5" x2="16" y2="115.5"/><line x1="0" y1="122.5" x2="16" y2="122.5"/><line x1="13" y1="129.5" x2="16" y2="129.5"/><line x1="11" y1="136.5" x2="16" y2="136.5"/><line x1="13" y1="143.5" x2="16" y2="143.5"/><line x1="9" y1="150.5" x2="16" y2="150.5"/><line x1="13" y1="157.5" x2="16" y2="157.5"/><line x1="11" y1="164.5" x2="16" y2="164.5"/><line x1="13" y1="171.5" x2="16" y2="171.5"/><line x1="0" y1="178.5" x2="16" y2="178.5"/><line x1="13" y1="185.5" x2="16" y2="185.5"/><line x1="11" y1="192.5" x2="16" y2="192.5"/><line x1="13" y1="199.5" x2="16" y2="199.5"/><line x1="9" y1="206.5" x2="16" y2="206.5"/><line x1="13" y1="213.5" x2="16" y2="213.5"/><line x1="11" y1="220.5" x2="16" y2="220.5"/><line x1="13" y1="227.5" x2="16" y2="227.5"/><line x1="0" y1="234.5" x2="16" y2="234.5"/><line x1="13" y1="241.5" x2="16" y2="241.5"/><line x1="11" y1="248.5" x2="16" y2="248.5"/><line x1="13" y1="255.5" x2="16" y2="255.5"/><line x1="9" y1="262.5" x2="16" y2="262.5"/><line x1="13" y1="269.5" x2="16" y2="269.5"/><line x1="11" y1="276.5" x2="16" y2="276.5"/><line x1="13" y1="283.5" x2="16" y2="283.5"/><line x1="0" y1="290.5" x2="16" y2="290.5"/><line x1="13" y1="297.5" x2="16" y2="297.5"/><line x1="11" y1="304.5" x2="16" y2="304.5"/><line x1="13" y1="311.5" x2="16" y2="311.5"/><line x1="9" y1="318.5" x2="16" y2="318.5"/><line x1="13" y1="325.5" x2="16" y2="325.5"/><line x1="11" y1="332.5" x2="16" y2="332.5"/><line x1="13" y1="339.5" x2="16" y2="339.5"/><line x1="0" y1="346.5" x2="16" y2="346.5"/><line x1="13" y1="353.5" x2="16" y2="353.5"/><line x1="11" y1="360.5" x2="16" y2="360.5"/><line x1="13" y1="367.5" x2="16" y2="367.5"/><line x1="9" y1="374.5" x2="16" y2="374.5"/><line x1="13" y1="381.5" x2="16" y2="381.5"/><line x1="11" y1="388.5" x2="16" y2="388.5"/><line x1="13" y1="395.5" x2="16" y2="395.5"/><line x1="0" y1="402.5" x2="16" y2="402.5"/><line x1="13" y1="410.5" x2="16" y2="410.5"/><line x1="11" y1="417.5" x2="16" y2="417.5"/><line x1="13" y1="424.5" x2="16" y2="424.5"/><line x1="9" y1="431.5" x2="16" y2="431.5"/><line x1="13" y1="438.5" x2="16" y2="438.5"/><line x1="11" y1="445.5" x2="16" y2="445.5"/><line x1="13" y1="452.5" x2="16" y2="452.5"/><line x1="0" y1="459.5" x2="16" y2="459.5"/><line x1="13" y1="466.5" x2="16" y2="466.5"/><line x1="11" y1="473.5" x2="16" y2="473.5"/><line x1="13" y1="480.5" x2="16" y2="480.5"/><line x1="9" y1="487.5" x2="16" y2="487.5"/><line x1="13" y1="494.5" x2="16" y2="494.5"/><line x1="11" y1="501.5" x2="16" y2="501.5"/><line x1="13" y1="508.5" x2="16" y2="508.5"/><line x1="0" y1="515.5" x2="16" y2="515.5"/><line x1="13" y1="522.5" x2="16" y2="522.5"/><line x1="11" y1="529.5" x2="16" y2="529.5"/><line x1="13" y1="536.5" x2="16" y2="536.5"/><line x1="9" y1="543.5" x2="16" y2="543.5"/><line x1="13" y1="550.5" x2="16" y2="550.5"/><line x1="11" y1="557.5" x2="16" y2="557.5"/><line x1="13" y1="564.5" x2="16" y2="564.5"/><line x1="0" y1="571.5" x2="16" y2="571.5"/><line x1="13" y1="578.5" x2="16" y2="578.5"/><line x1="11" y1="585.5" x2="16" y2="585.5"/><line x1="13" y1="592.5" x2="16" y2="592.5"/><line x1="9" y1="599.5" x2="16" y2="599.5"/><line x1="13" y1="606.5" x2="16" y2="606.5"/><line x1="11" y1="613.5" x2="16" y2="613.5"/><line x1="13" y1="620.5" x2="16" y2="620.5"/><line x1="0" y1="627.5" x2="16" y2="627.5"/><line x1="15.5" y1="0" x2="15.5" y2="632"/></g><g fill="#fff" font-family="Liberation Sans" font-size="9.5" font-weight="bold"><text x="2.5" y="18.5">0</text><text x="2.5" y="74.5">1</text><text x="2.5" y="131.5">2</text><text x="2.5" y="187.5">3</text><text x="2.5" y="243.5">4</text><text x="2.5" y="299.5">5</text><text x="2.5" y="355.5">6</text><text x="2.5" y="411.5">7</text><text x="2.5" y="468.5">8</text><text x="2.5" y="524.5">9</text><text x="2.5" y="580.5">1</text><text x="2.5" y="589.5">0</text><text x="2.5" y="636.5">1</text><text x="2.5" y="645.5">1</text></g></svg>
<div class="a" style="left:62px;top:145px;width:1181px;height:632px;background:#5f5f5f"></div>
<div class="a" style="left:209px;top:154px;width:956px;height:619px;background:#404040"></div>
<div class="a" style="left:211px;top:156px;width:955px;height:618px;background:#0a0a0a"></div>
<div class="a" style="left:210px;top:155px;width:954px;height:617px;background:#fff"></div>
<div class="a" style="left:687px;top:155px;width:1px;height:617px;background:#3a3a3a"></div>
<div class="a" style="left:237px;top:182px;width:422px;height:1px;background:#ff44ff"></div><div class="a" style="left:237px;top:744px;width:422px;height:1px;background:#ff44ff"></div><div class="a" style="left:237px;top:182px;width:1px;height:563px;background:#a244ff"></div><div class="a" style="left:658px;top:182px;width:1px;height:563px;background:#a244ff"></div>
<div class="a" style="left:715px;top:182px;width:422px;height:1px;background:#ff44ff"></div><div class="a" style="left:715px;top:744px;width:422px;height:1px;background:#ff44ff"></div><div class="a" style="left:715px;top:182px;width:1px;height:563px;background:#a244ff"></div><div class="a" style="left:1136px;top:182px;width:1px;height:563px;background:#a244ff"></div>
<div class="a" style="left:265px;top:210px;width:214px;height:51px;border:1px solid #4f9bff"></div>
<div class="a" style="left:266px;top:208px;font-size:30px;font-weight:bold;color:#111;letter-spacing:0px">Setthathirath</div>
<div class="a" style="left:253px;top:290px;width:287px;height:243px;border:1px solid #4f9bff"></div>
<div class="a ser" style="left:254px;top:287.0px;font-size:18.4px;line-height:22.4px;color:#111;white-space:nowrap;letter-spacing:0px"><span style="font-size:11.5px">SETTHATHIRATH</span><span style="letter-spacing:-0.08px">(24 janvier 1534 – 1571)</span></div>
<div class="a ser" style="left:254px;top:309.4px;font-size:18.4px;line-height:22.4px;color:#111;white-space:nowrap;letter-spacing:0.024px">est considéré comme l'un des<span style="color:#cc2229">les</span></div>
<div class="a ser" style="left:254px;top:331.8px;font-size:18.4px;line-height:22.4px;color:#111;white-space:nowrap;letter-spacing:0.08px"><span style="color:#cc2229">grands dirigeants de l'histoire du</span></div>
<div class="a ser" style="left:254px;top:354.2px;font-size:18.4px;line-height:22.4px;color:#111;white-space:nowrap;letter-spacing:-0.067px"><span style="color:#cc2229">Laos</span>Tout au long des années 1560</div>
<div class="a ser" style="left:254px;top:376.6px;font-size:18.4px;line-height:22.4px;color:#111;white-space:nowrap;letter-spacing:-0.029px">jusqu'à sa mort, il défendit avec succès</div>
<div class="a ser" style="left:254px;top:399.0px;font-size:18.4px;line-height:22.4px;color:#111;white-space:nowrap;letter-spacing:-0.022px">son royaume de Lan Xang contre les</div>
<div class="a ser" style="left:254px;top:421.4px;font-size:18.4px;line-height:22.4px;color:#111;white-space:nowrap;letter-spacing:0.147px">campagnes militaires du conquérant</div>
<div class="a ser" style="left:254px;top:443.8px;font-size:18.4px;line-height:22.4px;color:#111;white-space:nowrap;letter-spacing:0.043px">birman Bayinnaung, qui avait déjà</div>
<div class="a ser" style="left:254px;top:466.2px;font-size:18.4px;line-height:22.4px;color:#111;white-space:nowrap;letter-spacing:-0.011px">soumis Xieng Mai (Chiang Mai) en</div>
<div class="a ser" style="left:254px;top:488.6px;font-size:18.4px;line-height:22.4px;color:#111;white-space:nowrap;letter-spacing:-0.096px">1558 et Ayutthaya en 1564.</div>
<div class="a" style="left:785px;top:613px;width:343px;height:119px;border:1px solid #4f9bff"></div>
<div class="a ser" style="left:786px;top:610.0px;font-size:18.4px;line-height:22.4px;color:#111;white-space:nowrap;letter-spacing:0.182px">Setthathirath était un constructeur prolifique</div>
<div class="a ser" style="left:786px;top:632.4px;font-size:18.4px;line-height:22.4px;color:#111;white-space:nowrap;letter-spacing:0.191px">et a érigé de nombreux monuments boud-</div>
<div class="a ser" style="left:786px;top:654.8px;font-size:18.4px;line-height:22.4px;color:#111;white-space:nowrap;letter-spacing:0.056px">dhistes, notamment le Wat Xieng Thong à</div>
<div class="a ser" style="left:786px;top:677.2px;font-size:18.4px;line-height:22.4px;color:#111;white-space:nowrap;letter-spacing:-0.091px">Luang Prabang, le Haw Phra Kaew, le Wat</div>
<div class="a ser" style="left:786px;top:699.6px;font-size:18.4px;line-height:22.4px;color:#111;white-space:nowrap;letter-spacing:-0.014px">Ong Teu Mahawihan et le Pha That Luang à</div>
<svg class="a" style="left:1122px;top:715px" width="9" height="9"><rect x="0.5" y="0.5" width="8" height="8" fill="#fff" stroke="#f3a0a0"/><path d="M4.5 2 V7 M2 4.5 H7" stroke="#f3a0a0"/></svg>
<svg class="a" style="left:251px;top:572px" width="127" height="156" viewBox="0 0 127 156">
<defs><linearGradient id="sky1" x1="0" y1="0" x2="0" y2="1"><stop offset="0" stop-color="#c6c9d2"/><stop offset="1" stop-color="#cdced3"/></linearGradient></defs>
<rect width="127" height="156" fill="url(#sky1)"/>
<path d="M2 2 Q14 -2 22 6 Q34 16 30 26 Q28 40 22 46 L4 47 Q-2 30 0 10 Z" fill="#4a4632"/>
<circle cx="10" cy="14" r="5" fill="#5a5a3a"/><circle cx="22" cy="30" r="4" fill="#3e3e2a"/><circle cx="12" cy="36" r="5" fill="#353a28"/>
<rect x="7" y="45" width="3" height="40" fill="#4a3a2e"/>
<path d="M0 68 Q6 64 14 70 Q24 66 36 72 L44 80 L0 82 Z" fill="#3c4a2c"/>
<path d="M88 72 Q100 64 112 68 Q120 66 127 70 L127 82 L86 82 Z" fill="#44532f"/>
<rect x="0" y="79" width="127" height="10" fill="#b9a048"/>
<rect x="0" y="80" width="44" height="2" fill="#e0c04a"/><rect x="86" y="80" width="41" height="2" fill="#e0c04a"/>
<rect x="52" y="66" width="8" height="16" fill="#e2c03a"/><rect x="83" y="67" width="7" height="15" fill="#dcbc3c"/>
<rect x="60" y="58" width="19" height="7" fill="#e6c23a"/>
<rect x="62" y="63" width="15" height="20" fill="#b08a80"/><rect x="60" y="63" width="3" height="20" fill="#e0c040"/><rect x="76" y="63" width="3" height="20" fill="#e0c040"/>
<rect x="65" y="69" width="9" height="14" fill="#f2eee8"/><rect x="67" y="72" width="5" height="11" fill="#6a4020"/>
<rect x="69" y="40" width="1.5" height="6" fill="#d8b040"/>
<circle cx="69" cy="46" r="2" fill="#2a2220"/><path d="M64 49 L75 49 L75 57 L64 57 Z" fill="#d07a30"/><rect x="63" y="51" width="13" height="1" fill="#333"/>
<path d="M0 86 L44 86 L31 103 L0 103 Z" fill="#5a4a48"/><path d="M86 86 L127 86 L127 103 L104 103 Z" fill="#5e4e4e"/>
<circle cx="6" cy="92" r="3" fill="#7a4a6a"/><circle cx="120" cy="92" r="3" fill="#7a4a6a"/>
<path d="M40 86 L88 86 L104 103 L31 103 Z" fill="#c4a69a"/>
<rect x="15" y="92" width="16" height="11" fill="#efe4e2"/><rect x="105" y="92" width="17" height="11" fill="#efe4e2"/>
<rect x="0" y="103" width="127" height="30" fill="#d0613c"/>
<rect x="0" y="103" width="127" height="1.2" fill="#e0a088"/><rect x="12" y="109" width="115" height="1.2" fill="#dca088"/><rect x="6" y="115.5" width="121" height="1.2" fill="#dca088"/><rect x="0" y="125" width="127" height="1.2" fill="#dca088"/>
<path d="M0 100 L14 100 L6 121 L0 121 Z" fill="#c04a2a"/>
<rect x="0" y="131" width="127" height="8" fill="#b95a3c"/>
<path d="M34 138 L94 138 L100 156 L24 156 Z" fill="#c9714f"/>
<path d="M0 139 L33 139 L24 156 L0 156 Z" fill="#4b6231"/>
<path d="M94 139 L127 139 L127 156 L100 156 Z" fill="#4a5236"/>
</svg>
<div class="a" style="left:250px;top:571px;width:129px;height:158px;border:1px solid #4f9bff"></div>
<svg class="a" style="left:254px;top:567px" width="19" height="8"><rect x="0" y="2" width="19" height="3" fill="#fff"/><rect x="2" y="0.5" width="15" height="7" rx="3.5" fill="#1a73e8"/><g fill="none" stroke="#fff" stroke-width="1.2"><path d="M8 2.5 H6.5 A1.5 1.5 0 0 0 6.5 5.5 H8"/><path d="M11 2.5 H12.5 A1.5 1.5 0 0 1 12.5 5.5 H11"/><path d="M7.5 5 L11.5 3"/></g></svg>
<svg class="a" style="left:907px;top:193px" width="216" height="152" viewBox="0 0 216 152">
<rect width="216" height="152" fill="#dce1e7"/>
<rect x="0" y="50" width="40" height="45" fill="#b3a89c"/><rect x="8" y="62" width="22" height="20" fill="#cfc8c0"/>
<path d="M0 36 Q12 30 24 40 L22 60 L0 62 Z" fill="#4c6a3c"/>
<rect x="160" y="56" width="56" height="40" fill="#b8ad9f"/>
<g stroke="#4f6a3a" stroke-width="3" fill="none" stroke-linecap="round"><path d="M196 22 Q184 18 176 26"/><path d="M196 22 Q186 30 180 40"/><path d="M196 22 Q204 12 214 10"/><path d="M196 22 Q208 28 212 40"/><path d="M196 22 Q196 10 190 4"/><path d="M206 6 Q214 0 216 2"/><path d="M170 40 Q176 34 186 38"/></g>
<g stroke="#3f5a30" stroke-width="2.2" fill="none" stroke-linecap="round"><path d="M178 44 Q170 42 166 50"/><path d="M178 44 Q186 46 190 54"/><path d="M212 14 Q204 30 206 48"/></g>
<rect x="195" y="22" width="2" height="68" fill="#8a7a60"/><rect x="177" y="44" width="2" height="40" fill="#8a7a60"/><rect x="211" y="14" width="2" height="70" fill="#8a7a60"/>
<ellipse cx="190" cy="68" rx="14" ry="10" fill="#4f7a3f"/>
<rect x="188" y="77" width="26" height="12" fill="#f0f0f0"/>
<rect x="186" y="88" width="30" height="34" fill="#e4e4e4"/><path d="M190 88 V122 M196 88 V122 M202 88 V122 M208 88 V122" stroke="#aaa" stroke-width="0.8"/>
<path d="M20 27.5 L178 27.5 L157 43 L45 43 Z" fill="#7d6450"/>
<rect x="45" y="43" width="112" height="57" fill="#e9e7e3"/>
<rect x="39" y="52" width="10" height="10" fill="#4a4440"/><rect x="150" y="51" width="10" height="10" fill="#4a4440"/>
<rect x="55" y="48" width="90" height="11" fill="#2a3470"/><rect x="56" y="50" width="8" height="4" fill="#c03040"/>
<rect x="70" y="62" width="60" height="32" fill="#8d847b"/>
<path d="M98 33 L101 30 L104 33 L106 40 L104 48 L112 52 L116 62 L118 80 L84 80 L86 62 L90 52 L97 48 L95 40 Z" fill="#e2a91c"/>
<rect x="84" y="78" width="34" height="8" fill="#cda136"/>
<rect x="77" y="60" width="8" height="6" fill="#d03a3a"/><rect x="117" y="60" width="8" height="6" fill="#d03a3a"/>
<rect x="34" y="59" width="6" height="33" fill="#7cc490"/><rect x="49" y="73" width="6" height="22" fill="#58a868"/><rect x="57" y="63" width="9" height="33" fill="#e48a4a"/><rect x="62" y="70" width="5" height="25" fill="#c84a30"/>
<rect x="128" y="65" width="4" height="25" fill="#2a3a8a"/><rect x="136" y="67" width="8" height="27" fill="#4ab8d0"/>
<rect x="42" y="78" width="4" height="18" fill="#e0b030"/><rect x="98" y="78" width="6" height="14" fill="#e0b030"/><rect x="118" y="78" width="5" height="16" fill="#e0b030"/>
<rect x="144" y="68" width="39" height="6" fill="#c84450"/><rect x="145" y="74" width="36" height="17" fill="#2e2a24"/><rect x="147" y="88" width="32" height="2" fill="#c0a040"/>
<rect x="40" y="86" width="110" height="10" fill="#c8c2bc"/>
<rect x="10" y="96" width="178" height="30" fill="#6a6054"/>
<rect x="16" y="104" width="21" height="13" fill="#e3dfda"/><rect x="43" y="102" width="112" height="19" fill="#dedbd6"/><rect x="162" y="101" width="19" height="11" fill="#e3dfda"/>
<rect x="25" y="106" width="5" height="7" fill="#d0a030"/><rect x="168" y="104" width="5" height="7" fill="#d0a030"/>
<rect x="70" y="114" width="64" height="14" fill="#5a4a30"/><rect x="72" y="118" width="60" height="4" fill="#c0a030"/>
<rect x="0" y="124" width="210" height="16" fill="#6f675c"/>
<rect x="4" y="126" width="10" height="8" fill="#3a3430"/><rect x="12" y="130" width="12" height="3" fill="#5ab8c8"/>
<rect x="0" y="138" width="216" height="14" fill="#d2d7de"/>
</svg>
<div class="a" style="left:906px;top:192px;width:218px;height:154px;border:1px solid #4f9bff"></div>
<svg class="a" style="left:912px;top:189px" width="19" height="8"><rect x="0" y="2" width="19" height="3" fill="#fff"/><rect x="2" y="0.5" width="15" height="7" rx="3.5" fill="#1a73e8"/><g fill="none" stroke="#fff" stroke-width="1.2"><path d="M8 2.5 H6.5 A1.5 1.5 0 0 0 6.5 5.5 H8"/><path d="M11 2.5 H12.5 A1.5 1.5 0 0 1 12.5 5.5 H11"/><path d="M7.5 5 L11.5 3"/></g></svg>
<svg class="a" style="left:568px;top:349px" width="441" height="240" viewBox="568 349 441 240"><rect x="568" y="349" width="441" height="240" fill="#f1f2f4"/><path d="M640 470 L700 462 L760 480 L770 520 L740 540 L690 525 L660 500 Z" fill="#f4efe0"/><path d="M658 482 L712 508 L716 520 L728 554 L737 567 L747 589 L733 589 L719 569 L710 558 L697 544 L687 536 L660 520 L658 497 Z" fill="#f3ecdb"/><path d="M593 560 Q620 550 660 562 L665 589 L593 589 Z" fill="#d3efd9"/><path d="M567 565 L585 565 L588 589 L567 589 Z" fill="#d3efd9"/><path d="M680 500 L720 512 L720 530 L690 520 Z" fill="#d8eed8"/><path d="M710.8 385.2 L713.4 395.3 M729.3 362.9 L731.6 371.8 M598.8 370.8 L604.3 370.5 M666.4 499.6 L667.3 508.3 M998.5 360.2 L999.6 365.8 M619.9 423.0 L622.3 433.8 M849.8 438.4 L850.9 442.9 M658.8 512.3 L669.7 510.5 M767.9 420.9 L768.3 427.9 M821.3 475.0 L821.7 482.5 M1000.3 377.3 L1006.1 377.0 M783.6 358.4 L784.1 369.3 M954.1 424.3 L955.1 435.2 M769.2 550.6 L770.7 562.5 M594.8 517.4 L594.4 531.2 M693.5 441.6 L696.0 450.8 M642.1 377.1 L647.7 376.8 M677.2 442.8 L679.5 451.9 M810.3 561.0 L810.4 568.4 M751.1 435.1 L751.0 440.9 M645.7 404.7 L656.7 403.3 M683.9 350.0 L694.5 348.4 M988.3 514.7 L989.4 526.8 M591.8 564.9 L591.9 578.5 M741.0 444.8 L745.8 444.3 M597.7 399.1 L602.3 398.4 M568.1 385.3 L572.4 384.6 M953.6 496.4 L961.6 494.9 M728.6 378.5 L728.3 388.1 M781.4 369.6 L788.5 368.5 M933.5 387.7 L943.9 387.6 M632.7 479.4 L648.3 477.6 M948.7 516.1 L954.7 515.2 M908.4 476.8 L909.6 483.4 M925.9 585.4 L926.3 599.2 M894.3 403.4 L895.0 407.7 M580.3 416.1 L595.8 414.9 M765.2 573.9 L765.1 582.3 M665.2 403.4 L676.5 401.3 M965.0 550.7 L978.6 549.6 M605.4 507.5 L605.9 520.5 M778.8 391.8 L781.1 405.3 M996.5 444.0 L1009.2 443.8 M643.0 379.5 L656.6 379.2 M632.5 547.4 L633.1 555.5 M810.0 380.4 L821.8 380.4 M800.2 573.1 L814.1 572.6 M661.1 409.4 L671.9 407.4 M682.4 449.6 L690.6 449.4 M770.0 489.0 L772.2 503.9 M789.2 476.6 L791.7 485.6 M648.8 349.9 L650.9 359.4 M887.8 482.6 L898.4 481.3 M913.9 374.5 L915.3 381.6 M908.6 470.9 L909.2 485.8 M763.5 496.0 L764.9 508.2 M767.5 477.0 L779.9 476.8 M954.6 575.1 L969.8 573.5 M938.4 381.9 L943.3 381.3 M674.1 366.5 L674.6 381.3 M636.1 520.9 L639.4 535.1 M994.7 401.7 L996.2 411.4 M1004.5 548.8 L1014.6 547.4 M717.6 396.0 L721.8 395.7 M812.3 454.7 L823.7 452.9 M793.9 364.4 L794.4 380.1 M614.2 412.7 L621.4 412.4 M625.1 450.3 L625.3 457.4 M633.9 569.6 L634.2 574.7 M593.4 514.2 L608.3 510.8 M847.8 541.4 L852.6 541.2 M948.5 457.9 L963.5 456.3 M686.1 380.0 L687.2 385.2 M639.2 361.1 L646.8 359.8 M902.9 418.6 L904.7 426.6 M576.0 409.1 L586.6 408.4 M651.6 462.9 L654.8 476.4 M758.6 467.8 L760.1 477.8 M871.3 584.8 L883.8 584.3 M848.5 446.1 L853.9 444.9 M599.2 526.8 L604.1 525.8 M939.0 557.9 L940.3 564.7 M697.2 459.3 L704.3 458.3 M992.1 582.4 L995.2 597.7 M704.5 434.6 L714.1 433.1 M789.7 397.2 L791.6 404.1 M607.6 444.9 L615.0 443.1 M670.7 489.5 L671.2 501.4 M883.8 560.0 L899.4 557.4 M633.9 522.8 L637.5 536.4 M961.3 499.6 L961.5 505.2 M799.0 470.0 L799.4 484.0 M825.6 563.3 L826.0 570.0 M581.7 380.9 L595.4 378.0 M814.3 499.7 L815.0 509.5 M569.5 540.4 L570.7 550.8 M858.8 364.9 L859.7 369.7 M685.1 524.0 L700.8 523.1 M785.8 440.8 L799.0 439.8 M840.1 503.3 L847.0 501.8 M895.8 422.1 L897.0 426.6 M686.5 510.3 L687.0 517.8 M795.8 460.5 L810.2 457.4 M655.9 583.8 L658.4 592.9 M929.6 581.3 L936.0 580.2 M985.0 399.6 L987.3 409.6 M988.2 380.8 L989.9 395.4 M878.2 404.5 L878.7 408.8 M569.6 467.0 L575.2 466.1 M719.7 424.9 L723.2 437.4 M938.0 377.8 L938.9 392.6 M695.8 438.3 L706.9 438.3 M727.1 451.7 L732.2 450.6 M936.1 417.5 L937.5 424.6 M793.3 394.6 L807.9 394.4 M926.1 500.4 L926.0 511.0 M885.3 360.9 L887.1 373.8 M852.2 417.7 L857.7 417.6 M776.2 431.5 L791.9 430.5 M682.7 506.4 L691.4 505.5 M641.8 387.8 L651.8 387.6 M665.0 566.5 L665.8 572.1 M652.9 370.8 L659.6 369.3 M681.9 485.7 L682.3 494.7 M750.5 474.8 L755.2 474.0 M690.4 581.2 L701.9 579.9 M948.5 400.8 L957.2 399.3 M764.6 577.9 L764.7 582.2 M582.2 519.3 L583.6 530.2 M568.1 443.0 L568.4 457.2 M996.8 408.6 L1006.8 406.6 M868.8 575.0 L869.8 588.1 M769.7 481.4 L776.5 481.0 M973.7 503.9 L980.6 502.5 M848.6 516.7 L858.6 514.4 M825.1 442.1 L829.2 441.7 M701.0 459.6 L702.1 474.1 M777.6 405.3 L790.1 405.2 M703.6 354.2 L712.6 353.5 M681.4 509.2 L682.3 513.5 M717.1 449.9 L719.9 463.2 M894.0 470.2 L901.7 470.1 M929.6 404.4 L937.1 404.0 M987.8 468.0 L996.6 466.3 M861.4 576.7 L867.9 575.8 M997.6 383.1 L1006.1 381.1 M964.1 561.1 L963.7 576.2 M713.2 393.5 L713.4 397.9 M861.0 439.9 L867.0 438.9 M569.3 416.2 L574.8 416.1 M993.2 398.8 L1007.1 398.2 M758.7 360.8 L773.6 358.6 M653.1 436.4 L655.4 445.0 M926.0 533.0 L930.6 531.9 M973.8 410.7 L973.8 418.8 M688.1 578.8 L690.5 591.2 M707.6 415.2 L722.5 414.3 M847.6 575.4 L857.1 573.6 M989.9 577.9 L999.0 576.3 M785.6 571.7 L798.5 571.1 M930.8 534.5 L932.2 542.2 M727.6 536.7 L740.4 534.2 M677.1 364.5 L684.9 363.7 M1000.3 561.0 L1001.2 566.0 M610.5 468.6 L611.5 475.4 M751.8 497.9 L752.5 512.0 M861.0 378.1 L863.0 388.7 M732.5 526.1 L739.3 524.9 M635.6 561.2 L637.1 569.8 M1005.7 470.8 L1017.5 470.2 M1005.0 373.6 L1019.1 372.9 M971.2 358.7 L977.4 357.4 M997.1 489.0 L999.4 503.2 M766.1 411.4 L766.0 416.7 M830.9 497.8 L836.5 496.9 M658.0 410.2 L658.4 416.6 M573.0 427.5 L574.7 435.1 M657.7 539.9 L659.0 544.9 M742.3 481.0 L743.8 486.8 M874.7 447.3 L889.9 444.8 M705.8 485.0 L720.0 483.0 M1007.5 436.3 L1013.9 435.9 M570.6 565.4 L579.5 565.0 M957.3 459.6 L967.7 457.1 M850.5 567.4 L858.9 566.6 M790.5 384.0 L805.5 382.3 M616.0 466.7 L615.9 473.1 M623.9 575.3 L624.4 579.9 M976.4 442.1 L977.6 455.9 M638.7 537.6 L652.7 535.6 M933.7 392.9 L943.8 391.4 M737.2 378.5 L751.9 377.6 M586.1 484.0 L589.7 497.6 M619.9 492.9 L620.6 500.5 M753.3 488.8 L762.6 488.1 M761.3 354.6 L762.2 361.4 M904.7 536.2 L914.2 534.3 M615.2 379.8 L624.3 377.8 M793.0 358.8 L796.1 371.2 M910.9 471.8 L919.4 470.7 M987.3 381.7 L987.0 394.5 M927.4 395.5 L929.3 410.9 M972.0 388.6 L971.9 393.4 M722.7 530.5 L730.0 530.3 M927.7 383.5 L927.7 390.0 M683.9 470.4 L689.9 469.0 M639.1 573.7 L639.1 579.8 M914.1 376.6 L914.8 384.9 M953.0 482.2 L953.0 487.5 M1005.9 500.1 L1013.1 499.8 M1004.8 487.6 L1014.1 487.0 M645.9 527.5 L653.0 527.2 M849.9 585.2 L850.5 592.9 M568.8 357.1 L577.9 356.3 M794.1 563.9 L805.7 561.7 M577.8 349.6 L585.9 347.9 M666.9 489.1 L669.3 500.3 M777.4 381.3 L778.6 387.0 M610.2 502.2 L610.6 511.0 M684.5 351.8 L685.4 359.9 M852.7 455.5 L853.1 462.5 M966.4 359.6 L967.5 366.3 M593.7 535.9 L608.9 534.3 M630.7 396.9 L632.1 408.5 M926.7 390.9 L931.2 390.1 M960.2 536.9 L964.0 550.5 M896.6 460.7 L897.5 467.3 M614.4 404.8 L627.3 402.7 M874.5 551.9 L876.6 562.3 M760.3 538.2 L762.5 549.7 M993.6 401.1 L995.5 408.0 M672.1 527.5 L672.5 535.4 M956.2 427.9 L967.7 427.6 M873.5 508.7 L875.4 522.6 M875.6 554.8 L886.5 554.1 M703.7 399.9 L707.4 414.3 M631.8 355.5 L639.9 355.3 M630.6 355.9 L642.1 355.0 M875.4 525.8 L883.7 525.0 M928.5 545.7 L932.1 559.7 M971.3 575.6 L976.5 574.6 M583.2 552.5 L584.3 566.3 M846.5 418.0 L859.3 415.2 M658.4 425.6 L665.3 423.9 M692.6 520.8 L708.0 518.3 M790.1 553.3 L792.5 562.0 M760.5 534.5 L770.9 533.8 M663.5 555.9 L669.5 555.7 M568.6 397.5 L568.5 401.5 M784.5 467.0 L786.6 476.7 M721.1 548.6 L728.5 548.5 M662.7 516.9 L674.1 514.4 M603.7 538.1 L604.1 549.6 M724.8 445.3 L729.9 445.2 M959.8 355.0 L974.4 352.4 M789.0 440.0 L790.9 449.4 M802.4 530.1 L803.0 538.2 M712.1 386.3 L713.0 399.1 M642.8 454.3 L643.3 459.8 M771.7 561.4 L779.2 560.0 M878.1 551.5 L884.9 550.1 M712.0 474.3 L718.2 473.3 M998.0 523.9 L1003.3 523.8 M737.4 585.1 L737.9 594.3 M654.5 502.1 L663.0 500.5 M583.0 444.8 L583.6 454.8 M846.9 460.2 L855.7 459.3 M894.8 566.9 L907.7 565.6 M753.7 403.9 L753.8 417.1 M876.7 553.6 L877.5 563.0 M706.0 499.8 L719.3 497.9 M882.5 500.1 L891.9 498.8 M842.1 447.2 L842.1 453.4 M856.6 535.8 L872.2 533.8 M584.8 479.4 L600.1 478.6 M797.0 373.3 L798.3 385.8 M793.9 502.4 L794.9 511.3 M986.1 399.4 L988.1 412.4 M622.0 585.3 L629.1 583.6 M744.3 352.2 L756.5 350.5 M723.3 412.6 L738.5 411.7 M800.4 401.5 L801.4 408.0 M625.0 535.4 L625.8 545.0 M815.9 403.2 L817.8 414.7 M929.1 544.9 L939.5 543.1 M623.2 549.1 L630.4 548.8 M733.9 409.9 L737.8 409.1 M886.3 416.5 L895.9 414.9 M757.0 502.0 L759.4 516.9 M944.8 362.7 L944.8 376.1 M629.9 548.5 L631.0 552.5 M987.7 506.4 L993.3 505.2 M671.0 535.3 L685.6 532.3 M917.1 389.3 L918.3 402.6 M862.8 563.5 L862.9 569.9 M873.5 476.4 L875.5 490.8 M812.8 412.5 L822.5 410.4 M593.8 461.1 L603.7 459.9 M805.9 556.1 L815.5 555.7 M816.1 508.7 L817.5 517.6 M991.6 367.1 L992.0 371.4 M836.9 512.8 L839.6 528.4 M793.2 465.3 L796.4 477.5 M843.7 430.3 L845.3 439.8 M799.8 533.9 L808.7 532.7 M812.3 547.4 L821.2 547.0 M790.2 414.2 L789.9 426.1 M917.3 428.4 L928.1 426.6 M848.0 537.2 L862.6 536.2 M808.5 360.9 L814.6 359.4 M974.4 495.1 L974.9 510.0 M837.8 497.0 L838.5 508.1 M868.3 400.0 L870.1 413.0 M612.7 392.5 L627.6 391.7 M857.2 437.5 L857.5 448.3 M681.8 421.5 L690.8 420.0 M851.0 573.1 L855.5 572.7 M620.4 543.5 L620.4 552.8 M574.2 441.9 L574.1 457.7 M777.7 448.0 L784.2 447.4 M634.9 352.7 L640.4 352.3 M994.2 370.2 L995.1 374.3 M885.2 407.1 L886.2 411.6 M909.3 520.3 L909.6 525.3 M845.2 519.2 L852.3 519.1 M993.3 521.1 L1004.7 518.4 M928.4 368.1 L934.4 367.7 M947.7 465.7 L958.5 464.1 M761.5 511.5 L769.8 511.0 M852.4 500.1 L865.7 498.2 M984.7 537.3 L985.6 542.0 M997.5 517.8 L999.4 528.9 M999.1 548.5 L1000.7 557.5 M959.7 439.4 L961.0 454.1 M924.1 417.0 L933.0 415.4 M826.7 544.8 L830.3 558.4 M926.0 557.1 L928.6 571.1 M923.9 513.3 L924.7 518.3 M812.2 540.4 L827.3 539.5 M671.2 494.7 L672.1 501.1 M680.3 529.3 L681.0 534.3 M923.7 534.3 L938.4 532.8 M958.3 474.2 L964.6 473.6 M652.8 392.4 L654.5 403.0 M745.5 473.1 L761.0 469.5 M733.0 374.5 L733.2 380.3 M831.4 431.8 L832.5 436.0 M1004.8 556.9 L1011.9 556.1 M911.6 451.2 L912.2 465.0 M992.9 410.0 L998.9 408.8 M604.9 361.2 L605.0 370.7 M985.7 567.4 L994.4 566.5 M620.9 579.2 L632.5 578.0 M989.8 509.7 L995.6 509.0 M993.9 587.0 L1000.8 585.4 M723.2 565.7 L723.3 570.2 M914.8 519.3 L914.7 524.0 M631.9 530.2 L632.4 537.8 M828.8 530.9 L835.8 529.8 M622.7 464.5 L628.4 463.5 M866.8 352.0 L867.8 356.4 M977.1 401.9 L977.3 416.6 M629.6 456.3 L643.7 456.1 M845.1 457.6 L854.8 457.1 M845.0 383.3 L857.3 380.4 M812.0 383.7 L813.7 392.5 M636.7 414.1 L637.7 420.0 M784.5 425.3 L788.2 440.6 M593.1 563.8 L595.1 573.3 M694.2 410.9 L709.9 408.5 M1008.2 571.0 L1022.7 568.5 M593.3 523.4 L597.5 523.3 M923.9 430.8 L937.5 427.5 M800.2 393.6 L806.8 393.5 M820.0 382.1 L832.5 381.4 M654.7 368.0 L664.7 367.1 M688.8 398.4 L689.6 412.2 M825.1 397.5 L834.0 397.0 M886.3 362.3 L888.6 376.2 M949.2 467.3 L959.0 467.1 M952.6 412.9 L961.0 412.6 M640.1 438.1 L642.8 447.9 M764.6 472.8 L778.3 471.8 M949.7 426.0 L951.7 438.9 M595.0 558.5 L596.2 568.6 M802.0 478.0 L808.6 477.9 M648.4 373.6 L652.8 373.5 M610.5 516.8 L621.4 514.1 M822.2 474.5 L825.7 488.5 M884.2 359.8 L894.2 358.6 M691.3 378.3 L702.2 376.0 M947.7 384.3 L948.0 390.3 M932.3 574.0 L946.2 572.1 M799.8 444.0 L800.1 452.0 M674.0 429.4 L687.7 429.4 M970.5 544.6 L973.1 554.5 M990.4 573.2 L1001.9 571.6 M728.7 476.4 L738.7 475.0 M577.2 382.5 L577.8 397.7 M847.2 543.2 L847.3 547.6 M850.9 412.8 L852.9 423.1 M975.7 498.1 L984.8 497.0 M987.3 418.0 L992.8 417.5 M830.1 578.5 L831.9 587.9 M803.4 384.6 L810.8 383.1 M747.3 418.2 L757.6 415.9 M938.3 495.4 L938.8 501.8 M881.3 459.6 L882.1 469.2 M704.9 407.1 L713.5 406.1 M826.3 351.9 L833.1 351.6 M813.5 466.9 L821.0 466.9 M908.5 387.1 L917.8 386.8 M595.3 442.1 L600.6 441.8 M667.3 579.2 L669.1 587.1 M723.4 511.1 L723.7 524.9 M796.3 526.3 L796.8 536.0 M914.2 519.1 L917.5 533.1 M569.9 532.8 L571.8 548.2 M820.2 449.3 L820.3 460.6 M735.4 457.5 L742.9 457.0 M740.3 482.3 L753.6 480.1 M942.7 468.9 L950.2 467.4 M631.9 487.1 L635.6 501.7 M710.8 551.4 L710.7 557.9 M756.1 567.5 L766.6 565.1 M787.3 569.9 L789.1 585.8 M796.2 473.1 L797.5 481.3 M830.3 433.3 L831.0 443.5 M611.6 438.9 L622.5 437.7 M956.0 580.5 L967.4 578.9 M1007.3 431.4 L1007.4 437.4 M708.3 583.8 L708.9 589.1 M962.5 514.6 L962.1 529.2 M753.6 386.5 L763.6 385.4 M651.0 392.8 L651.7 401.0 M1006.2 501.8 L1019.6 499.9 M703.3 514.8 L717.2 512.4 M826.5 509.3 L837.1 508.1 M685.3 504.2 L685.0 515.1 M749.3 378.2 L754.6 377.9 M612.1 389.9 L612.4 401.3 M923.7 363.9 L931.6 363.5 M883.5 433.9 L888.6 433.0 M966.6 488.7 L975.2 487.6 M592.1 562.7 L592.0 572.0 M841.5 408.8 L855.8 408.6 M706.8 564.7 L708.8 575.8 M991.4 467.9 L993.1 476.4 M884.8 402.1 L894.7 401.8 M917.6 407.4 L923.8 406.5 M996.5 418.8 L998.9 428.9 M738.0 445.8 L751.7 442.9 M722.9 407.8 L729.6 406.6 M583.4 508.4 L595.6 505.9 M608.9 413.7 L611.0 422.8 M936.8 542.2 L949.3 540.2 M734.2 579.0 L744.3 578.9 M668.2 457.6 L675.3 457.1 M964.7 490.0 L975.8 488.0 M661.7 558.4 L672.2 557.1 M687.3 534.2 L698.0 533.3 M705.1 442.6 L719.0 439.8 M709.6 508.1 L717.9 507.2 M788.7 420.3 L795.3 419.2 M623.6 521.0 L638.4 518.9 M909.8 560.9 L911.5 568.0 M581.0 512.1 L582.5 520.9 M858.6 516.8 L866.9 516.5 M845.3 392.6 L858.1 392.3 M882.3 358.7 L888.5 357.4 M701.7 440.4 L713.2 438.5 M647.2 550.5 L647.6 557.5 M759.8 513.2 L773.4 509.9 M910.4 417.7 L921.7 417.3 M588.9 407.7 L595.4 407.3 M971.3 528.9 L980.0 528.2 M897.7 547.9 L912.7 544.6 M755.0 572.3 L755.7 586.2 M845.0 457.7 L854.1 457.0 M793.7 571.8 L798.3 571.5 M877.9 542.4 L893.4 540.7 M849.1 479.5 L857.2 477.7 M749.5 397.3 L761.7 394.8 M863.6 406.1 L872.9 405.0 M980.7 433.4 L986.4 433.2 M816.4 429.1 L817.8 442.1 M642.6 509.0 L644.4 522.0 M934.5 376.5 L940.9 375.5 M594.6 416.4 L604.0 415.7 M617.8 426.9 L623.8 426.0 M599.7 351.6 L599.9 356.6 M884.3 584.3 L886.6 593.8 M759.5 394.6 L763.5 409.1 M852.2 499.7 L852.8 506.7 M676.5 382.3 L690.5 381.5 M698.7 393.6 L698.9 408.7 M642.3 537.3 L642.7 545.2 M649.4 547.1 L659.9 545.5 M730.9 548.5 L741.4 546.1 M845.0 545.7 L845.0 561.1 M786.0 468.9 L796.8 467.1 M603.4 514.1 L618.9 512.0 M607.5 358.6 L620.0 356.1 M569.2 550.8 L569.6 559.9 M692.9 507.8 L694.1 515.8 M761.5 508.9 L761.5 514.8 M698.4 455.4 L699.5 461.6 M605.5 426.7 L620.4 426.6 M949.6 582.8 L950.8 596.5 M594.5 511.3 L596.4 522.0 M988.2 464.4 L989.7 472.4 M958.3 355.7 L967.7 355.0 M605.6 507.5 L614.5 506.6 M801.7 484.6 L807.7 483.3 M960.5 480.5 L967.5 480.3 M609.9 476.4 L620.4 475.1 M667.9 486.4 L678.9 485.2 M603.4 446.9 L617.6 445.0 M810.8 520.5 L814.5 536.0 M886.2 373.5 L887.1 379.5 M991.4 484.1 L994.4 497.1 M593.4 405.9 L604.2 403.2 M662.0 421.0 L664.1 435.5 M841.9 558.3 L841.9 572.8 M642.1 527.9 L654.2 527.2 M932.1 378.5 L947.4 377.5 M886.3 359.4 L888.8 369.7 M922.1 376.1 L922.6 383.2 M653.2 456.2 L653.7 461.6 M577.2 375.5 L579.5 385.9 M695.9 513.9 L710.1 511.0 M805.4 514.5 L805.4 518.6 M719.0 385.2 L719.1 398.8 M583.6 392.7 L584.2 401.4 M777.8 387.0 L780.0 401.3 M837.4 367.2 L851.9 364.5 M827.8 359.5 L837.3 358.0 M822.5 442.1 L833.1 439.5 M715.2 353.9 L719.7 353.9 M632.3 510.0 L642.2 508.3 M683.6 485.6 L683.3 501.5 M583.0 483.6 L583.2 496.8 M847.2 501.3 L860.5 499.0 M952.9 574.3 L955.3 587.2 M894.1 471.1 L895.9 481.6 M747.0 363.5 L762.7 360.9 M780.3 437.1 L788.4 435.7 M627.8 350.7 L629.1 360.0 M818.8 421.6 L826.2 419.9 M704.0 523.4 L704.0 531.5 M974.3 489.0 L985.0 486.9 M1003.5 434.7 L1005.5 448.9 M597.9 465.3 L599.2 472.2 M578.2 388.5 L584.8 388.0 M744.2 397.1 L744.3 408.9 M654.7 525.1 L655.2 530.1 M925.0 559.1 L931.1 557.8 M804.8 559.1 L804.8 565.7 M712.1 528.8 L713.9 540.9 M717.0 362.8 L728.2 360.2 M715.5 467.6 L717.4 477.0 M574.0 571.1 L573.9 575.7 M838.8 522.8 L844.5 521.5 M630.9 533.1 L640.0 532.7 M805.5 490.2 L806.4 501.4 M713.9 526.9 L727.0 525.9 M910.2 423.2 L910.0 432.7 M690.7 474.6 L691.7 478.6 M777.8 506.3 L780.4 522.0 M668.6 530.6 L674.1 529.3 M594.5 469.4 L597.8 484.4 M729.2 384.8 L744.3 383.9 M639.5 356.0 L642.6 371.4 M788.0 501.7 L797.5 501.2 M710.8 565.8 L715.6 565.5 M852.6 445.4 L855.3 455.9 M748.8 569.6 L749.3 576.3 M679.1 412.0 L685.4 410.8 M902.8 503.3 L909.4 503.2 M819.2 386.6 L819.2 393.8 M899.4 546.5 L909.1 544.9 M960.9 387.8 L961.8 397.2 M823.4 560.9 L831.8 560.7 M911.9 556.2 L927.8 555.7 M699.2 354.9 L703.4 354.8 M970.0 385.2 L971.5 391.0 M869.1 370.7 L881.7 370.4 M956.9 584.1 L970.2 581.6 M872.1 358.1 L873.9 367.1 M614.2 353.8 L616.8 368.1 M621.1 466.0 L627.2 465.1 M870.3 384.5 L870.9 389.8 M723.9 468.1 L725.0 474.6 M994.7 561.0 L995.8 567.0 M684.7 365.5 L693.5 364.5 M813.5 436.0 L825.3 435.1 M807.9 480.7 L807.5 495.2 M884.5 444.8 L900.1 442.6 M738.7 441.5 L754.3 438.2 M570.3 494.9 L572.5 506.0 M734.2 406.8 L748.0 403.8 M913.7 567.0 L921.6 566.5 M853.0 480.7 L857.0 480.7 M897.1 553.8 L898.6 569.7 M671.4 500.1 L673.3 512.5 M741.5 475.3 L742.1 483.1 M845.3 479.3 L852.5 478.7 M968.8 462.6 L969.9 472.2 M665.6 383.1 L666.7 393.3 M800.6 544.2 L814.2 541.5 M771.0 502.7 L771.0 517.1 M587.1 440.5 L587.2 446.0 M635.8 409.4 L649.3 407.3 M797.9 457.7 L813.7 455.4 M874.5 456.8 L887.6 456.2 M634.1 512.2 L640.9 511.5 M731.5 430.6 L737.7 429.1 M819.6 362.9 L826.9 362.4 M710.9 407.0 L713.7 418.3 M946.8 397.4 L958.2 396.8 M731.9 359.5 L744.3 357.6 M698.2 446.9 L698.4 455.1 M737.9 487.9 L741.3 503.2 M881.9 438.4 L882.8 443.1 M901.4 440.1 L903.2 454.8 M901.9 355.1 L903.1 364.6 M938.3 448.6 L947.5 448.3 M784.7 471.8 L785.5 484.7 M745.1 358.7 L746.5 371.9 M907.5 377.3 L921.0 374.3 M612.9 370.2 L613.3 374.8 M868.3 519.7 L880.3 516.9 M752.3 489.1 L752.7 503.6 M632.2 429.2 L636.4 444.5 M689.1 412.0 L703.2 409.4 M813.1 471.6 L820.5 469.9 M950.2 541.5 L951.5 547.8 M591.0 477.8 L600.8 476.6 M825.4 436.8 L828.6 451.5 M813.3 361.3 L822.1 360.3 M817.1 426.7 L824.6 426.3 M881.4 541.6 L883.4 556.7 M764.2 559.7 L775.8 558.2 M589.6 556.0 L595.7 555.4 M974.8 483.7 L976.2 495.7 M865.7 419.8 L871.4 419.6 M972.8 398.7 L985.9 395.8 M987.3 448.5 L990.2 463.1 M870.5 386.2 L875.0 385.8 M936.7 419.5 L944.5 418.7 M815.2 386.0 L817.6 399.8 M635.0 540.8 L635.7 545.2 M735.6 502.8 L740.7 502.2 M772.8 523.8 L778.2 523.4 M933.4 378.3 L932.9 393.6 M800.1 418.8 L810.1 418.2 M978.1 371.3 L989.2 371.0 M806.5 370.2 L820.9 367.7 M940.8 403.5 L943.7 414.3 M994.6 431.6 L994.9 436.2 M714.9 456.9 L721.0 456.5 M915.4 420.6 L920.5 420.0 M811.2 538.1 L811.8 542.5 M794.4 372.3 L796.9 383.0 M723.6 438.9 L724.9 444.8 M983.2 428.6 L983.3 438.4 M633.7 371.6 L636.0 381.2 M804.4 377.2 L814.6 375.1 M791.5 437.1 L797.9 436.1 M624.1 406.6 L625.8 421.2 M574.7 575.4 L585.5 574.9 M871.8 404.0 L873.4 411.0 M581.6 443.4 L584.3 457.8 M605.2 487.8 L618.5 486.5 M881.5 363.9 L897.2 362.4 M586.2 497.4 L586.4 505.5 M925.5 459.8 L929.5 474.6 M749.7 446.7 L762.3 444.4 M867.4 385.3 L873.6 384.0 M664.9 428.5 L664.5 441.9 M779.6 468.4 L779.5 481.4 M848.6 396.8 L848.9 410.2 M608.7 521.2 L624.0 518.1 M864.7 527.9 L879.9 527.3 M967.0 527.8 L967.3 538.9 M760.0 547.0 L760.0 554.6 M991.8 476.6 L995.4 491.8 M915.3 409.5 L916.6 415.7 M769.9 405.8 L782.2 405.5 M881.3 443.1 L881.7 455.3 M983.3 547.2 L994.8 544.6 M936.8 430.5 L937.1 444.0 M570.0 466.4 L583.4 463.5 M752.6 494.1 L759.1 493.1 M724.0 551.7 L724.9 556.7 M687.5 517.3 L701.2 516.2 M621.2 512.9 L627.4 512.6 M687.7 578.8 L702.1 576.1 M837.1 563.5 L852.5 561.7 M791.5 586.3 L797.4 586.0 M800.5 349.1 L809.9 349.0 M924.9 409.2 L935.3 406.9 M948.3 472.3 L963.0 472.1 M861.8 367.2 L864.0 382.6 M727.6 507.7 L729.2 517.8 M866.4 566.7 L881.9 564.3 M593.1 549.4 L594.1 558.7 M899.2 562.9 L899.4 567.3 M711.4 381.9 L711.4 387.6 M827.1 487.4 L839.9 485.5 M850.9 416.4 L852.8 426.8 M753.5 583.8 L753.9 595.9 M735.8 580.1 L736.3 587.4 M639.4 487.0 L639.7 495.2 M629.7 472.8 L632.5 485.4 M643.3 423.9 L651.7 422.4 M994.4 579.9 L1009.5 577.4 M655.0 426.0 L662.0 424.5 M741.7 441.5 L743.0 447.9 M968.8 457.1 L969.8 470.4 M706.8 385.5 L708.2 396.1 M863.7 529.6 L878.6 527.3 M801.4 418.2 L804.0 431.2 M586.2 547.4 L588.7 562.5 M685.1 407.4 L698.1 406.0 M867.0 448.1 L868.8 455.5 M852.3 581.2 L853.2 594.4 M742.0 574.7 L743.4 583.3 M923.3 432.9 L933.7 432.6 M797.8 509.7 L799.7 517.5 M597.1 448.2 L597.3 460.2 M822.8 445.9 L825.5 459.8 M915.7 550.2 L928.7 549.2 M788.8 564.6 L789.4 578.4 M854.1 559.9 L866.6 559.0 M838.0 415.0 L851.9 413.7 M688.4 400.1 L700.2 397.5 M997.9 541.5 L1002.8 541.2 M937.8 427.0 L943.5 426.5 M689.3 363.2 L702.9 361.7 M585.5 547.6 L596.8 545.4 M718.0 428.4 L720.7 441.7 M660.2 550.5 L660.6 554.8 M911.1 355.8 L911.8 360.5 M845.8 522.9 L847.4 532.9 M827.6 403.3 L827.3 417.0 M992.0 428.1 L994.4 437.5 M627.0 458.0 L627.5 467.4 M718.7 394.6 L724.9 393.5 M892.6 472.9 L904.8 470.5 M654.8 412.7 L655.7 428.4 M897.7 576.6 L898.4 589.2 M595.7 398.4 L608.3 397.9 M845.9 412.3 L857.3 410.0 M1005.2 422.4 L1013.3 420.8 M964.5 542.1 L969.6 540.9 M635.9 535.6 L650.8 535.6 M918.5 463.3 L919.7 468.5 M816.5 470.9 L820.7 470.1 M968.8 519.5 L968.6 528.7 M891.0 441.2 L891.1 446.8 M573.7 400.4 L574.3 404.4 M934.2 537.7 L948.5 534.3 M803.6 366.0 L818.1 364.7 M781.7 502.5 L796.3 499.8 M736.7 374.0 L738.2 380.2 M769.3 489.5 L769.8 498.8 M597.8 522.9 L606.5 521.8 M864.7 520.3 L877.0 519.3 M776.0 383.0 L776.5 387.8 M673.2 585.8 L686.5 583.9 M931.3 501.1 L932.6 506.1 M998.5 541.7 L1005.2 540.1 M978.4 401.7 L978.3 413.4 M973.4 412.1 L986.1 409.1 M613.8 582.6 L616.7 595.9 M639.8 471.9 L654.5 471.2 M972.1 349.5 L973.5 363.3 M789.6 497.8 L789.7 502.7 M591.9 479.9 L596.0 479.3 M896.5 354.8 L896.8 364.3 M621.9 505.0 L627.1 504.3 M998.6 480.1 L1011.1 477.3 M942.7 552.6 L950.3 551.4 M904.2 384.5 L903.9 397.7 M571.1 367.0 L582.2 366.2 M797.4 458.3 L809.1 457.3 M972.1 524.8 L972.1 538.9 M884.1 356.3 L884.2 365.5 M955.3 392.2 L957.0 404.5 M679.4 421.1 L684.5 420.3 M763.3 584.4 L763.2 597.6 M937.0 587.6 L938.4 594.5 M749.9 354.0 L764.9 353.6 M713.0 533.9 L713.0 547.4 M802.6 374.2 L804.6 385.5 M729.9 477.9 L732.2 488.1 M854.6 478.2 L856.8 493.0 M872.2 581.2 L879.5 579.8 M967.8 352.3 L983.6 351.2 M645.7 454.1 L646.6 467.0 M900.1 408.6 L912.1 405.8 M660.3 411.3 L661.1 422.3 M857.3 492.5 L858.2 497.2 M597.5 352.5 L602.7 351.4 M785.7 581.7 L788.2 594.7 M646.5 373.0 L658.6 371.3 M764.2 523.8 L772.3 523.7 M935.0 356.4 L937.9 370.3 M922.1 510.0 L928.2 508.5 M967.1 386.9 L968.2 398.8 M647.6 383.5 L656.2 383.4 M855.6 485.7 L859.7 484.8 M944.0 380.2 L946.0 392.7 M629.0 538.1 L639.2 536.6 M617.2 408.6 L618.7 417.0 M905.3 402.8 L913.7 401.2 M729.1 502.9 L733.7 502.8 M860.7 549.7 L869.7 547.6 M619.1 459.4 L620.4 464.6 M779.5 390.7 L784.8 390.0 M597.9 435.7 L608.6 435.5 M599.5 402.4 L601.0 416.7 M992.4 554.9 L1002.7 554.8 M673.7 390.0 L674.8 394.8 M685.0 570.8 L689.9 570.5 M767.8 425.3 L776.1 424.6 M620.8 585.2 L624.8 584.4 M856.0 472.5 L868.7 470.9 M804.9 405.2 L816.6 404.1 M632.0 541.9 L632.7 556.1 M730.2 565.7 L741.2 563.6 M965.6 368.7 L974.6 366.5 M630.0 395.0 L631.4 410.2 M745.3 512.0 L752.1 511.9 M778.4 471.8 L780.3 487.6 M842.0 400.9 L845.3 416.6 M769.4 403.3 L770.9 412.1 M719.3 509.5 L725.2 508.6 M933.2 349.0 L935.0 358.3 M815.8 519.8 L821.1 518.8 M991.5 384.8 L1002.4 383.5 M959.0 362.7 L969.8 360.5 M767.5 447.1 L768.6 461.4 M990.0 413.5 L990.7 418.1 M971.4 374.0 L978.8 372.7 M994.4 557.9 L1008.5 556.3 M923.9 505.8 L925.5 512.6 M858.2 489.7 L858.3 505.3 M653.0 367.2 L653.6 373.4 M873.2 410.4 L883.4 408.8 M866.7 366.6 L867.5 376.2 M864.4 540.9 L876.4 539.4 M880.7 504.4 L894.2 504.3 M670.7 452.4 L672.6 461.1 M992.1 565.0 L1000.4 564.5 M860.5 533.1 L867.0 531.8 M685.3 357.6 L694.3 356.3 M602.3 488.8 L603.1 497.0 M878.7 453.9 L882.8 453.4 M866.1 387.6 L879.3 387.5 M936.5 503.1 L937.4 518.7 M654.6 532.9 L668.2 530.4 M833.1 552.9 L833.7 559.3 M574.6 477.4 L575.5 482.1 M570.1 390.6 L571.9 397.1 M684.9 519.7 L686.3 524.8 M980.2 581.8 L990.3 580.2 M709.2 449.2 L713.8 448.3 M605.0 388.0 L617.3 386.9 M684.0 539.0 L685.6 548.8 M651.1 572.0 L652.6 577.6 M873.5 441.5 L876.2 454.7 M921.7 371.6 L924.3 383.8 M922.6 538.9 L934.2 536.3 M817.2 382.2 L822.4 381.6 M847.6 406.8 L857.9 405.4 M887.5 356.4 L889.0 363.8 M850.1 514.9 L850.2 521.3 M705.2 508.0 L711.8 506.7 M908.2 547.5 L907.9 561.0 M704.6 424.7 L707.4 435.7 M607.3 360.8 L610.7 375.6 M954.9 459.8 L964.7 457.7 M797.9 436.1 L799.4 449.3 M614.8 365.8 L621.8 364.9 M862.8 402.3 L875.3 400.7 M907.7 438.2 L922.9 437.9 M840.9 374.2 L848.2 373.5 M584.5 584.5 L586.7 593.8 M841.1 421.0 L854.4 420.2 M760.9 369.6 L776.1 366.2 M590.6 418.1 L591.8 423.3 M599.2 388.4 L599.3 394.4 M644.6 532.6 L650.0 531.7 M675.1 582.2 L687.8 579.9 M961.3 566.0 L972.5 565.9 M695.3 460.7 L695.6 466.2 M653.4 579.0 L661.5 578.6 M677.3 410.2 L683.1 410.2" stroke="#dde1e8" stroke-width="0.6" fill="none"/><path d="M567 395 L650 390 L720 392 L800 388 L900 392 L1009 386 M567 430 Q640 420 700 440 L760 456 M759 456 L830 430 L893 418 L1009 410 M740 470 L800 452 L900 445 L1009 440 M894 418 L900 500 L906 589 M788 534 L900 530 L1009 535 M567 534 Q640 538 668 542 Q700 560 733 589 M640 360 L650 440 M700 349 L705 470 M820 349 L830 430 M760 520 L780 589 M850 470 L860 589 M567 552 Q600 548 640 560 M740 540 L800 560 L870 560 M920 460 L1009 500 M721 499 Q750 530 767 561 Q775 578 779 589 M760 470 Q800 500 812 589" stroke="#cdd3de" stroke-width="1.3" fill="none"/><path d="M760 362 Q790 352 813 350 M843 350 Q860 356 872 358 Q910 358 952 357 M954 349 Q940 400 934 470 Q936 530 940 589 M813 350 Q806 380 803 396 Q800 430 798 460 M568 428 Q600 390 628 350 M760 396 Q780 392 800 388 M756 470 Q780 478 800 474 Q860 466 935 462 Q980 464 1009 469 M600 370 Q640 362 700 365" stroke="#a8dcf2" stroke-width="1.2" fill="none"/><path d="M620 541 Q650 552 672 570 Q684 580 690 589" stroke="#c3cad6" stroke-width="2" fill="none"/><path d="M640 536 L658 544 L671 558 L682 571 L692 589 L699 589 L688 567 L674 550 L656 538 Z" fill="#f3ecdb"/><path d="M567 475 L622 482 L651 490 L658 497 L660 520 L687 536 L697 544 L710 558 L719 569 L733 589 L692 589 L682 571 L671 558 L658 543.5 L640 535 L620 527 L594 523 L567 520 Z" fill="#8fd4ef"/><path d="M567 500 Q620 510 660 535 Q700 560 716 589" stroke="#3a4a5a" stroke-width="0.8" stroke-dasharray="3 1.5" fill="none"/><circle cx="977" cy="567" r="16" fill="#8fd4ef"/><path d="M567 466 L628 465 L668 462 L700 475 L716 500 M625 467 L680 480 L716 500 L763 455 L830 395 L863 349" stroke="#8da2c2" stroke-width="2.6" fill="none"/><path d="M573 472 Q568 466 569 464 A4 4 0 1 1 577 464 Q578 466 573 472 Z" fill="#e8336b"/><circle cx="573" cy="464" r="1.5" fill="#fff"/><path d="M640 460 Q635 454 636 452 A4 4 0 1 1 644 452 Q645 454 640 460 Z" fill="#e8336b"/><circle cx="640" cy="452" r="1.5" fill="#fff"/><path d="M780 459 Q775 453 776 451 A4 4 0 1 1 784 451 Q785 453 780 459 Z" fill="#e8336b"/><circle cx="780" cy="451" r="1.5" fill="#fff"/><path d="M867 383 Q862 377 863 375 A4 4 0 1 1 871 375 Q872 377 867 383 Z" fill="#e8336b"/><circle cx="867" cy="375" r="1.5" fill="#fff"/><path d="M818 488 Q813 482 814 480 A4 4 0 1 1 822 480 Q823 482 818 488 Z" fill="#e8336b"/><circle cx="818" cy="480" r="1.5" fill="#fff"/><path d="M846 592 Q841 586 842 584 A4 4 0 1 1 850 584 Q851 586 846 592 Z" fill="#e8336b"/><circle cx="846" cy="584" r="1.5" fill="#fff"/><path d="M762 452 Q757 446 758 444 A4 4 0 1 1 766 444 Q767 446 762 452 Z" fill="#17a3b0"/><circle cx="762" cy="444" r="1.5" fill="#fff"/><path d="M921 507 Q916 501 917 499 A4 4 0 1 1 925 499 Q926 501 921 507 Z" fill="#17a3b0"/><circle cx="921" cy="499" r="1.5" fill="#fff"/><path d="M908 512 Q903 506 904 504 A4 4 0 1 1 912 504 Q913 506 908 512 Z" fill="#4a8cf0"/><circle cx="908" cy="504" r="1.5" fill="#fff"/><path d="M865 416 Q860 410 861 408 A4 4 0 1 1 869 408 Q870 410 865 416 Z" fill="#777"/><circle cx="865" cy="408" r="1.5" fill="#fff"/><path d="M894 423 Q889 417 890 415 A4 4 0 1 1 898 415 Q899 417 894 423 Z" fill="#777"/><circle cx="894" cy="415" r="1.5" fill="#fff"/><path d="M754 530 Q749 524 750 522 A4 4 0 1 1 758 522 Q759 524 754 530 Z" fill="#888"/><circle cx="754" cy="522" r="1.5" fill="#fff"/><path d="M780 505 Q775 499 776 497 A4 4 0 1 1 784 497 Q785 499 780 505 Z" fill="#4a8cf0"/><circle cx="780" cy="497" r="1.5" fill="#fff"/><g font-family="Liberation Sans" font-size="6.5" fill="#e8336b"><text x="578" y="466">Pullman Hotel</text><text x="578" y="472">Vientiane Laos</text><text x="645" y="454">Crowne Plaza</text><text x="645" y="460">Vientiane an IHG</text><text x="785" y="456">Urbanz</text><text x="872" y="377">Le That Luang</text><text x="872" y="383">D'Or Boutique</text><text x="823" y="482">Muong Thanh</text><text x="823" y="488">Luxury Vientiane</text><text x="795" y="589">107 Military Hospital</text></g><g font-family="Liberation Sans" font-size="6.5" fill="#1a98a8"><text x="712" y="444">Patuxai - Victory</text><text x="730" y="450">Monument</text><text x="926" y="500">Lao-Itecc</text><text x="926" y="506">Exhibition Center</text></g><g font-family="Liberation Sans" font-size="6.5" fill="#4a8cf0"><text x="786" y="502">D-Mart (Dongpalan)</text><text x="872" y="509">ITECC Mall</text></g><g font-family="Liberation Sans" font-size="6.5" fill="#555"><text x="820" y="410">Pha That Luang</text><text x="833" y="416">Vientiane</text><text x="900" y="417">Sohamdome, it cuts</text><text x="900" y="423">her heart barber</text><text x="689" y="478">Mango spa &amp;</text><text x="689" y="484">Mango massage</text><text x="715" y="522">Wat Si Muang</text><text x="636" y="505">Hat Don Chan</text><text x="955" y="470">MB Travel Company</text></g><g font-family="Liberation Sans" font-size="5.5" fill="#666"><text x="830" y="359">BAN</text><text x="818" y="365">PHONXHENG</text><text x="772" y="381">HONGKAIKEO</text><text x="752" y="418">SYSOUPHONG</text><text x="570" y="438">BAN DONNUENG</text><text x="595" y="452">BAN CHANTA</text><text x="648" y="371">BAN NONG</text><text x="648" y="376">SOHATHONG</text><text x="570" y="364">BAN</text><text x="570" y="369">NONGDUONG</text><text x="905" y="534">Rue Dongpalan</text></g><g font-family="Liberation Sans" font-size="5.5" fill="#1a98a8"><text x="598" y="505" transform="rotate(10 598 505)">Mekong River</text></g><rect x="742" y="455" width="5" height="5" fill="#2a7ae0"/><rect x="797" y="387" width="5" height="5" fill="#2a7ae0"/><rect x="855" y="379" width="5" height="5" fill="#2a7ae0"/><rect x="680" y="475" width="7" height="7" fill="#fff" stroke="#ccc" stroke-width="0.5"/><rect x="681" y="477" width="5" height="3" fill="#e0a820"/></svg>
<div class="a" style="left:567px;top:348px;width:443px;height:242px;border:1px solid #4f9bff"></div>
<svg class="a" style="left:573px;top:345px" width="19" height="8"><rect x="0" y="2" width="19" height="3" fill="#fff"/><rect x="2" y="0.5" width="15" height="7" rx="3.5" fill="#1a73e8"/><g fill="none" stroke="#fff" stroke-width="1.2"><path d="M8 2.5 H6.5 A1.5 1.5 0 0 0 6.5 5.5 H8"/><path d="M11 2.5 H12.5 A1.5 1.5 0 0 1 12.5 5.5 H11"/><path d="M7.5 5 L11.5 3"/></g></svg>
<div class="a" style="left:658px;top:348px;width:1px;height:242px;background:#a244ff"></div>
<div class="a" style="left:715px;top:348px;width:1px;height:242px;background:#a244ff"></div>
<div class="a" style="left:687px;top:348px;width:1px;height:242px;background:#3a3a3a"></div>
<div class="a" style="left:1243px;top:129px;width:15px;height:648px;background-color:#4b4b4b;background-image:radial-gradient(#414141 0.7px,transparent 0.8px);background-size:3px 3px"></div>
<svg class="a" style="left:1245px;top:135px" width="11" height="7"><path d="M1 6 L5.5 1.5 L10 6" fill="none" stroke="#777" stroke-width="1.2"/></svg>
<div class="a" style="left:1244px;top:619px;width:13px;height:127px;background:#666;border-radius:7px"></div>
<svg class="a" style="left:1245px;top:766px" width="11" height="7"><path d="M1 1 L5.5 5.5 L10 1" fill="none" stroke="#999" stroke-width="1.2"/></svg>
<div class="a" style="left:46px;top:777px;width:1212px;height:17px;background:#535353"></div>
<div class="a" style="left:0px;top:794px;width:1559px;height:3px;background:#3a3a3a"></div>
<div class="a" style="left:60px;top:780px;font-size:10.5px;color:#e6e6e6">58,5%</div>
<svg class="a" style="left:102px;top:783px" width="10" height="7"><path d="M1 1.5 L5 5.5 L9 1.5" fill="none" stroke="#d0d0d0" stroke-width="1.1"/></svg>
<svg class="a" style="left:122px;top:780px" width="10" height="11"><rect x="0" y="1" width="2" height="9" fill="#bbb"/><path d="M9 1 V10 L3 5.5 Z" fill="#bbb"/></svg>
<svg class="a" style="left:145px;top:780px" width="7" height="11"><path d="M6 1 V10 L1 5.5 Z" fill="#aaa"/></svg>
<div class="a" style="left:162px;top:778px;width:91px;height:16px;background:#474747;border:1px solid #6c6c6c;border-radius:3px"></div>
<div class="a" style="left:235px;top:778px;width:1px;height:16px;background:#6c6c6c"></div>
<div class="a" style="left:167px;top:780px;font-size:11px;color:#f0f0f0">6</div>
<svg class="a" style="left:240px;top:783px" width="10" height="7"><path d="M1 1.5 L5 5.5 L9 1.5" fill="none" stroke="#d0d0d0" stroke-width="1.1"/></svg>
<svg class="a" style="left:265px;top:780px" width="7" height="11"><path d="M1 1 V10 L6 5.5 Z" fill="#aaa"/></svg>
<svg class="a" style="left:284px;top:780px" width="10" height="11"><path d="M1 1 V10 L7 5.5 Z" fill="#bbb"/><rect x="8" y="1" width="2" height="9" fill="#bbb"/></svg>
<svg class="a" style="left:309px;top:778px" width="18" height="15"><path d="M3 13 V8 A5.5 5.5 0 0 1 14 8 V10" fill="none" stroke="#aaa" stroke-width="2.2"/><path d="M8.5 4 V8 H11" fill="none" stroke="#aaa" stroke-width="1.4"/><path d="M14 12 L17 12 L15.5 14 Z" fill="#aaa"/></svg>
<div class="a" style="left:342px;top:780px;font-size:10.5px;color:#e6e6e6">[Basic] (working)</div>
<svg class="a" style="left:443px;top:783px" width="10" height="7"><path d="M1 1.5 L5 5.5 L9 1.5" fill="none" stroke="#d0d0d0" stroke-width="1.1"/></svg>
<div class="a" style="left:468px;top:781px;width:10px;height:10px;border-radius:5px;background:#e9343c"></div>
<div class="a" style="left:483px;top:780px;font-size:10.5px;color:#e6e6e6">3 errors</div>
<svg class="a" style="left:546px;top:783px" width="10" height="7"><path d="M1 1.5 L5 5.5 L9 1.5" fill="none" stroke="#d0d0d0" stroke-width="1.1"/></svg>
<div class="a" style="left:560px;top:777px;width:683px;height:17px;background-color:#4b4b4b;background-image:radial-gradient(#414141 0.7px,transparent 0.8px);background-size:3px 3px"></div>
<svg class="a" style="left:564px;top:781px" width="7" height="11"><path d="M6 1 L1.5 5.5 L6 10" fill="none" stroke="#888" stroke-width="1.1"/></svg>
<div class="a" style="left:685px;top:778px;width:389px;height:16px;background:#666;border-radius:8px"></div>
<svg class="a" style="left:1209px;top:781px" width="7" height="11"><path d="M1 1 L5.5 5.5 L1 10" fill="none" stroke="#888" stroke-width="1.1"/></svg>
<div class="a" style="left:1226px;top:780px;width:16px;height:12px;border:1.5px solid #ccc"></div>
<div class="a" style="left:1233px;top:780px;width:1.5px;height:12px;background:#ccc"></div>
<div class="a" style="left:1258px;top:100px;width:3px;height:697px;background:#3b3b3b"></div>
<div class="a" style="left:1261px;top:100px;width:292px;height:12px;background-color:#464646;background-image:radial-gradient(#3c3c3c 0.7px,transparent 0.8px);background-size:3px 3px"></div>
<svg class="a" style="left:1284px;top:102px" width="12" height="8"><path d="M5 1 L2 4 L5 7 Z M10 1 L7 4 L10 7 Z" fill="#d0d0d0"/></svg>
<svg class="a" style="left:1539px;top:102px" width="12" height="8"><path d="M1 1 L4 4 L1 7 Z M6 1 L9 4 L6 7 Z" fill="#d0d0d0"/></svg>
<div class="a" style="left:1261px;top:112px;width:37px;height:682px;background:#535353"></div>
<div class="a" style="left:1298px;top:100px;width:3px;height:697px;background:#3b3b3b"></div>
<div class="a" style="left:1553px;top:100px;width:2px;height:697px;background:#3b3b3b"></div>
<div class="a" style="left:1555px;top:100px;width:2px;height:697px;background:#535353"></div>
<div class="a" style="left:1261px;top:112px;width:37px;height:1px;background:#3b3b3b"></div>
<div class="a" style="left:1261px;top:153px;width:37px;height:1px;background:#3b3b3b"></div>
<div class="a" style="left:1261px;top:221px;width:37px;height:1px;background:#3b3b3b"></div>
<div class="a" style="left:1261px;top:262px;width:37px;height:1px;background:#3b3b3b"></div>
<div class="a" style="left:1261px;top:303px;width:37px;height:1px;background:#3b3b3b"></div>
<div class="a" style="left:1261px;top:372px;width:37px;height:1px;background:#3b3b3b"></div>
<div class="a" style="left:1261px;top:413px;width:37px;height:1px;background:#3b3b3b"></div>
<div class="a" style="left:1261px;top:454px;width:37px;height:1px;background:#3b3b3b"></div>
<div class="a" style="left:1261px;top:495px;width:37px;height:1px;background:#3b3b3b"></div>
<div class="a" style="left:1270px;top:117px;width:19px;height:4px;background:repeating-linear-gradient(90deg,#2e2e2e 0 1px,transparent 1px 2px)"></div>
<div class="a" style="left:1270px;top:157px;width:19px;height:4px;background:repeating-linear-gradient(90deg,#2e2e2e 0 1px,transparent 1px 2px)"></div>
<div class="a" style="left:1270px;top:227px;width:19px;height:4px;background:repeating-linear-gradient(90deg,#2e2e2e 0 1px,transparent 1px 2px)"></div>
<div class="a" style="left:1270px;top:268px;width:19px;height:4px;background:repeating-linear-gradient(90deg,#2e2e2e 0 1px,transparent 1px 2px)"></div>
<div class="a" style="left:1270px;top:309px;width:19px;height:4px;background:repeating-linear-gradient(90deg,#2e2e2e 0 1px,transparent 1px 2px)"></div>
<div class="a" style="left:1270px;top:378px;width:19px;height:4px;background:repeating-linear-gradient(90deg,#2e2e2e 0 1px,transparent 1px 2px)"></div>
<div class="a" style="left:1270px;top:419px;width:19px;height:4px;background:repeating-linear-gradient(90deg,#2e2e2e 0 1px,transparent 1px 2px)"></div>
<div class="a" style="left:1270px;top:460px;width:19px;height:4px;background:repeating-linear-gradient(90deg,#2e2e2e 0 1px,transparent 1px 2px)"></div>
<svg class="a" style="left:1261px;top:112px" width="37" height="390"><g transform="translate(19,22)"><rect x="-9" y="-4" width="10" height="8" rx="4" fill="none" stroke="#cfcfcf" stroke-width="1.8"/><rect x="-1" y="-4" width="10" height="8" rx="4" fill="none" stroke="#cfcfcf" stroke-width="1.8"/></g><g transform="translate(19,64)"><rect x="-8" y="-5" width="16" height="1.5" fill="#cfcfcf"/><rect x="-8" y="-1" width="16" height="2" fill="#cfcfcf"/><rect x="-8" y="3" width="16" height="3" fill="#cfcfcf"/></g><g transform="translate(19,92)"><path d="M-9 2 Q-9 -6 0 -6 Q9 -6 9 0 Q9 3 5 2 Q2 2 3 5 Q3 7 -2 7 Q-9 7 -9 2 Z" fill="#cfcfcf"/><circle cx="-5" cy="1" r="1.5" fill="#535353"/><circle cx="-2" cy="-3" r="1.5" fill="#535353"/><circle cx="3" cy="-3" r="1.5" fill="#535353"/><circle cx="-2" cy="4" r="1.5" fill="#535353"/></g><g transform="translate(19,134)"><rect x="-8" y="-5" width="16" height="10" fill="#cfcfcf"/><path d="M-8 0 H8 M-3 -5 V5 M3 -5 V5" stroke="#535353" stroke-width="1.2"/><rect x="-7" y="-4" width="14" height="3" fill="#eee"/></g><g transform="translate(19,175)"><path d="M-8 -6 H8 M-8 6 H8 M-8 -2 H-5 M-8 2 H-5 M5 -2 H8 M5 2 H8" stroke="#cfcfcf" stroke-width="1.3"/><ellipse cx="0" cy="0" rx="4" ry="4" fill="#cfcfcf"/></g><g transform="translate(19,214)"><rect x="-7" y="1" width="6" height="6" fill="none" stroke="#cfcfcf" stroke-width="1.2"/><rect x="-5" y="3" width="6" height="6" fill="none" stroke="#cfcfcf" stroke-width="1.2"/><path d="M3 -8 H8 V8 M5 -8 V8" stroke="#cfcfcf" stroke-width="1.4"/><circle cx="3" cy="-5" r="3" fill="#cfcfcf"/></g><g transform="translate(19,242)"><rect x="-7" y="1" width="6" height="6" fill="none" stroke="#cfcfcf" stroke-width="1.2"/><rect x="-5" y="3" width="6" height="6" fill="none" stroke="#cfcfcf" stroke-width="1.2"/><path d="M0 2 L4 -8 L8 2 M1.5 -2 H6.5" fill="none" stroke="#cfcfcf" stroke-width="1.4"/></g><g transform="translate(19,285)"><rect x="-7" y="1" width="6" height="6" fill="none" stroke="#cfcfcf" stroke-width="1.2"/><rect x="-5" y="3" width="6" height="6" fill="none" stroke="#cfcfcf" stroke-width="1.2"/><path d="M-3 -8 H8 V3 H3" fill="none" stroke="#cfcfcf" stroke-width="1.4"/></g><g transform="translate(19,325)"><path d="M-6 -8 H3 L6 -5 V8 H-6 Z" fill="#cfcfcf"/><path d="M-4 -3 L-2 -1 L1 -5 M-4 2 L-2 4 L1 0" stroke="#535353" stroke-width="1"/><path d="M2 8 L9 1 L11 3 L4 10 Z" fill="#cfcfcf" stroke="#535353" stroke-width="0.8"/></g><g transform="translate(19,367)"><path d="M1 -8 V8 M5 -8 V8 M1 -8 H7" stroke="#cfcfcf" stroke-width="1.6"/><path d="M1 -8 A4 4 0 0 0 1 1 Z" fill="#cfcfcf"/></g></svg>
<div class="a" style="left:1301px;top:112px;width:252px;height:682px;background:#535353"></div>
<div class="a" style="left:1301px;top:112px;width:252px;height:27px;background-color:#464646;background-image:radial-gradient(#3c3c3c 0.7px,transparent 0.8px);background-size:3px 3px"></div>
<div class="a" style="left:1352px;top:112px;width:60px;height:27px;background:#535353"></div>
<div class="a" style="left:1463px;top:112px;width:1px;height:27px;background:#3d3d3d"></div>
<div class="a" style="left:1514px;top:112px;width:1px;height:27px;background:#3d3d3d"></div>
<div class="a" style="left:1313px;top:119px;font-size:11px;font-weight:bold;color:#a8a8a8;width:39px;overflow:hidden;white-space:nowrap">Properties</div>
<svg class="a" style="left:1358px;top:120px" width="7" height="12"><path d="M1 4.5 L3.5 1.5 L6 4.5 M1 7.5 L3.5 10.5 L6 7.5" fill="none" stroke="#ccc" stroke-width="1.1"/></svg>
<div class="a" style="left:1369px;top:119px;font-size:11px;font-weight:bold;color:#f2f2f2">Pages</div>
<div class="a" style="left:1424px;top:119px;font-size:11px;font-weight:bold;color:#a8a8a8;width:38px;overflow:hidden;white-space:nowrap">CC Libraries</div>
<div class="a" style="left:1474px;top:119px;font-size:11px;font-weight:bold;color:#a8a8a8">Layers</div>
<svg class="a" style="left:1536px;top:121px" width="12" height="10"><path d="M0 0.5 H12 M0 3.5 H12 M0 6.5 H12 M0 9.5 H12" stroke="#ccc"/></svg>
<div class="a" style="left:1301px;top:111px;width:252px;height:1px;background:#3a3a3a"></div>
<div class="a" style="left:4px;top:99px;width:1550px;height:1px;background:#3a3a3a"></div>
<div class="a" style="left:1304px;top:148px;font-size:10.5px;color:#ececec">[None]</div>
<div class="a" style="left:1512px;top:144px;width:19px;height:23px;background:#fff;border:1px solid #999"></div>
<div class="a" style="left:1304px;top:177px;font-size:10.5px;color:#ececec">A-Parent</div>
<div class="a" style="left:1493px;top:172px;width:19px;height:23px;background:#fff;border:1px solid #999"></div>
<div class="a" style="left:1512px;top:172px;width:19px;height:23px;background:#fff;border:1px solid #999"></div>
<div class="a" style="left:1301px;top:217px;width:252px;height:2px;background:#4a4a4a"></div>
<div class="a" style="left:1305px;top:230px;width:4px;height:11px;background:#8a8a8a"></div>
<div class="a" style="left:1322px;top:230px;font-size:11px;font-weight:bold;color:#ececec">Letter V</div>
<svg class="a" style="left:1377px;top:234px" width="8" height="5"><path d="M0 0 H7 L3.5 4 Z" fill="#ccc"/></svg>
<div class="a" style="left:1389px;top:224px;width:1px;height:24px;background:#6a6a6a"></div>
<div class="a" style="left:1301px;top:251px;width:252px;height:1px;border-top:1px dotted #444"></div>
<svg class="a" style="left:1354px;top:254px" width="9" height="5"><path d="M0 0 H9 L4.5 5 Z" fill="#cfcfcf"/></svg>
<div class="a" style="left:1345px;top:255px;width:1px;height:45px;background:#bbb"></div>
<div class="a" style="left:1345px;top:260px;width:29px;height:36px;background:#fff;border:1px solid #888"></div>
<svg class="a" style="left:1348px;top:262px" width="24" height="10"><rect x="1" y="1.5" width="13" height="2.5" fill="#000"/><rect x="0" y="4.5" width="14" height="2.5" fill="#000"/><rect x="6" y="7.5" width="8" height="1.5" fill="#000"/><text x="15" y="8.5" font-family="Liberation Sans" font-size="9" fill="#000">A</text></svg>
<div class="a" style="left:1355px;top:302px;font-size:10.5px;font-weight:bold;color:#ececec">1</div>
<div class="a" style="left:1345px;top:318px;width:1px;height:51px;background:#bbb"></div><div class="a" style="left:1317px;top:324px;width:57px;height:36px;background:#fff;border:1px solid #888"></div><svg class="a" style="left:1318px;top:325px" width="55" height="34"><rect x="10.2" y="0.5" width="15" height="1.5" fill="#000"/><rect x="10.2" y="1.7" width="15" height="1.5" fill="#8a8a8a"/><rect x="10.2" y="2.9" width="15" height="1.5" fill="#000"/><rect x="10.2" y="4.1" width="15" height="1.5" fill="#8a8a8a"/><rect x="10.2" y="5.3" width="15" height="1.5" fill="#000"/><rect x="10.2" y="6.5" width="15" height="1.5" fill="#8a8a8a"/><rect x="10.2" y="7.7" width="15" height="1.5" fill="#000"/><rect x="10.2" y="8.9" width="15" height="1.1" fill="#8a8a8a"/><rect x="1" y="10.0" width="23.6" height="1.5" fill="#000"/><rect x="1" y="11.2" width="23.6" height="1.5" fill="#8a8a8a"/><rect x="1" y="12.4" width="23.6" height="1.5" fill="#000"/><rect x="1" y="13.6" width="23.6" height="1.5" fill="#8a8a8a"/><rect x="1" y="14.8" width="23.6" height="1.5" fill="#000"/><rect x="1" y="16.0" width="23.6" height="1.5" fill="#8a8a8a"/><rect x="1" y="17.2" width="23.6" height="1.5" fill="#000"/><rect x="1" y="18.4" width="23.6" height="1.5" fill="#8a8a8a"/><rect x="1" y="19.6" width="23.6" height="1.5" fill="#000"/><rect x="1" y="20.8" width="23.6" height="1.5" fill="#8a8a8a"/><rect x="1" y="22.0" width="23.6" height="1.5" fill="#000"/><rect x="1" y="23.2" width="23.6" height="0.5" fill="#8a8a8a"/><rect x="3" y="25" width="7.8" height="7.8" fill="#777"/><rect x="12" y="25" width="8" height="7.8" fill="#6a5a40"/><rect x="14" y="27" width="3" height="4" fill="#d0a060"/><text x="1" y="9" font-family="Liberation Sans" font-size="9.5" fill="#000">A</text><rect x="30.6" y="2" width="19.4" height="30.5" fill="#7a8070"/><rect x="30.6" y="2" width="19.4" height="8" fill="#8a94a8"/><rect x="37" y="8" width="6" height="16" fill="#c8c0a8"/><ellipse cx="40" cy="28" rx="9" ry="4" fill="#333"/><text x="45" y="9" font-family="Liberation Sans" font-size="9.5" fill="#000">A</text><line x1="27.5" y1="0" x2="27.5" y2="34" stroke="#bbb"/></svg><div class="a" style="left:1335px;top:366px;font-size:10.5px;font-weight:bold;color:#ececec">2-3</div>
<div class="a" style="left:1345px;top:382px;width:1px;height:51px;background:#bbb"></div><div class="a" style="left:1317px;top:388px;width:57px;height:36px;background:#fff;border:1px solid #888"></div><svg class="a" style="left:1318px;top:389px" width="55" height="34"><rect x="10.2" y="0" width="17" height="10" fill="#c8d0d8"/><rect x="12" y="1.0" width="13" height="1.5" fill="#000"/><rect x="12" y="2.2" width="13" height="1.5" fill="#8a8a8a"/><rect x="12" y="3.4" width="13" height="1.5" fill="#000"/><rect x="12" y="4.6" width="13" height="1.5" fill="#8a8a8a"/><rect x="12" y="5.8" width="13" height="1.5" fill="#000"/><rect x="12" y="7.0" width="13" height="1.0" fill="#8a8a8a"/><rect x="5.2" y="10" width="22" height="24" fill="#4a5a3a"/><rect x="6" y="10" width="8" height="17" fill="#b08058"/><rect x="5.2" y="25" width="22" height="5" fill="#e8e8e8"/><rect x="5.2" y="30" width="22" height="4" fill="#b88a70"/><text x="1" y="9" font-family="Liberation Sans" font-size="9.5" fill="#000">A</text><rect x="28" y="0" width="19" height="34" fill="#4a5a3a"/><rect x="28" y="0" width="19" height="10" fill="#c8d0d8"/><rect x="37" y="2" width="8" height="22" fill="#d8a820"/><rect x="28" y="25" width="19" height="5" fill="#e8e8e8"/><rect x="28" y="30" width="19" height="4" fill="#b88a70"/><text x="45" y="9" font-family="Liberation Sans" font-size="9.5" fill="#000">A</text><line x1="27.5" y1="0" x2="27.5" y2="34" stroke="#bbb"/></svg><div class="a" style="left:1335px;top:430px;font-size:10.5px;font-weight:bold;color:#ececec">4-5</div>
<div class="a" style="left:1345px;top:446px;width:1px;height:51px;background:#bbb"></div><div class="a" style="left:1317px;top:452px;width:57px;height:36px;background:#fff;border:1px solid #888"></div><svg class="a" style="left:1318px;top:453px" width="55" height="34"><rect x="0" y="0" width="27" height="34" fill="#9cc8f8"/><rect x="0" y="0" width="11.6" height="10" fill="#fff"/><rect x="1" y="12" width="17" height="1.6" fill="#1a3a90"/><rect x="1" y="14.5" width="16" height="1.6" fill="#4a70b0"/><rect x="1" y="17" width="15" height="1.6" fill="#1a3a90"/><rect x="1" y="19" width="12" height="1.2" fill="#1a3a90"/><rect x="12" y="4" width="5" height="3" fill="#4a70b0"/><rect x="0.4" y="22.7" width="8" height="11" fill="#7a9ac8"/><rect x="19" y="15" width="6" height="10" fill="#80aee0"/><text x="1" y="9" font-family="Liberation Sans" font-size="9.5" fill="#000">A</text><rect x="28" y="9.5" width="18" height="15" fill="#eef0f4"/><rect x="30" y="12" width="3" height="1" fill="#f08080"/><rect x="40" y="20" width="3" height="2" fill="#60c0e0"/><rect x="34" y="1" width="5.6" height="8" fill="#6a5040"/><rect x="32" y="26" width="19.8" height="6.7" fill="#111"/><rect x="32" y="28.5" width="19.8" height="1" fill="#777"/><text x="45" y="9" font-family="Liberation Sans" font-size="9.5" fill="#000">A</text><line x1="27.5" y1="0" x2="27.5" y2="34" stroke="#bbb"/></svg><div class="a" style="left:1332px;top:493px;width:23px;height:14px;background:#2680eb"></div><div class="a" style="left:1334px;top:494px;font-size:10.5px;font-weight:bold;color:#fff">6-7</div>
<div class="a" style="left:1301px;top:771px;width:252px;height:1px;border-top:1px dotted #444"></div>
<div class="a" style="left:1306px;top:777px;font-size:10px;color:#ececec">7 Pages in 4 Spreads</div>
<svg class="a" style="left:1459px;top:775px" width="20" height="15"><rect x="1.5" y="5.5" width="9" height="7" fill="none" stroke="#ccc" stroke-width="1.2"/><rect x="5.5" y="1.5" width="7" height="9" fill="#535353" stroke="#ccc" stroke-width="1.2"/><path d="M15 12 L18 12 L16.5 14 Z" fill="#ccc"/></svg>
<svg class="a" style="left:1490px;top:775px" width="13" height="13"><rect x="0.5" y="0.5" width="12" height="12" fill="none" stroke="#ccc"/><path d="M6.5 3 V10 M3 6.5 H10" stroke="#ccc"/></svg>
<svg class="a" style="left:1518px;top:774px" width="12" height="15"><path d="M0 2.5 H12 M4 2 V0.5 H8 V2" fill="none" stroke="#ccc" stroke-width="1.2"/><rect x="1.5" y="4" width="9" height="10" fill="none" stroke="#ccc" stroke-width="1.2"/><path d="M4 6 V12 M6 6 V12 M8 6 V12" stroke="#ccc"/></svg>
<div class="a" style="left:1557px;top:0;width:2px;height:797px;background:#2e2e2e"></div>
</body></html>
